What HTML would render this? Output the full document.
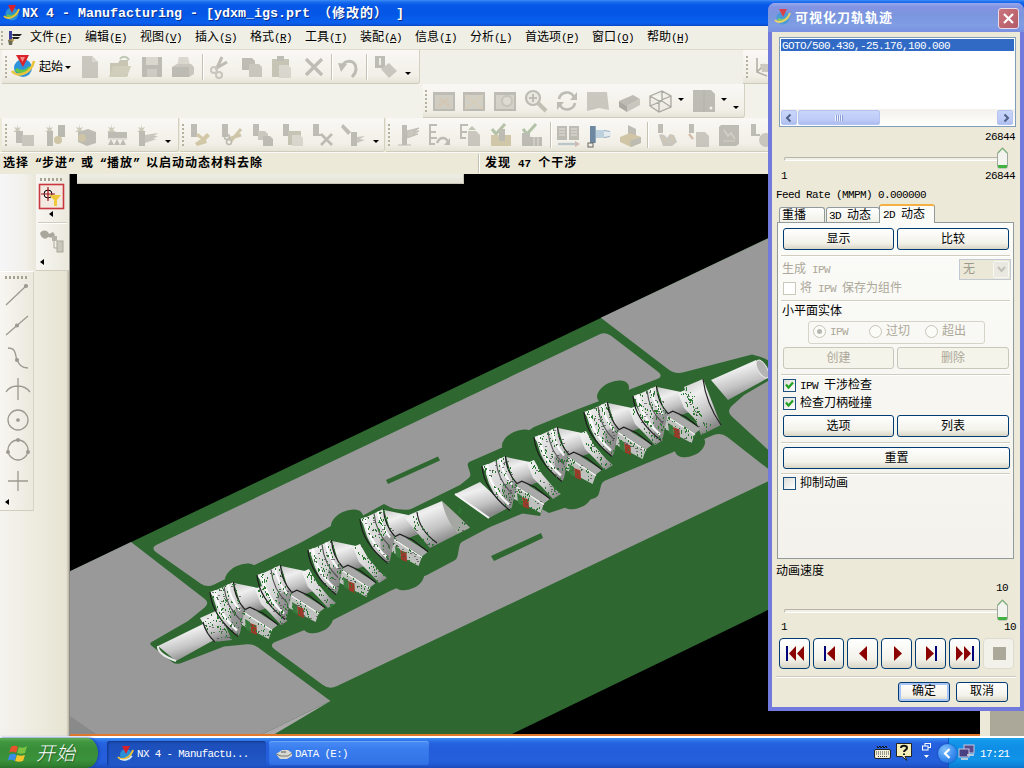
<!DOCTYPE html>
<html lang="zh-CN">
<head>
<meta charset="utf-8">
<title>NX 4 - Manufacturing</title>
<style>
*{box-sizing:border-box;margin:0;padding:0}
html,body{width:1024px;height:768px;overflow:hidden;background:#ece9d8}
body{position:relative;font-family:"Liberation Mono","Noto Sans CJK SC",monospace;font-size:12px;line-height:14px;color:#000}
.a{position:absolute}
.l{font-family:"Liberation Mono",monospace;font-size:11px;letter-spacing:-.6px;position:relative;top:0;word-spacing:0}
.t{position:absolute;white-space:nowrap;height:14px;line-height:14px;margin-top:1px;word-spacing:-1.2px}
.b{font-weight:bold;letter-spacing:1px}
.b .l{letter-spacing:0;font-weight:bold}
.q{display:inline-block;width:13px;letter-spacing:0}
/* ---------- main window ---------- */
#title{left:0;top:0;width:1024px;height:26px;background:linear-gradient(#3d8ef6 0,#1a6cee 2px,#0659e8 5px,#0457e6 14px,#0a60ee 22px,#0a5ae4 24px,#0a46c4 26px)}
#title .tx{left:22px;top:6px;text-shadow:1px 1px 0 #0a2f8a;color:#fff;font-weight:bold;font-size:13px;letter-spacing:1px;height:16px;line-height:16px;white-space:nowrap}
#title .tx .l{font-size:13.33px;letter-spacing:0;font-weight:bold;top:0}
#menubar{left:0;top:26px;width:1024px;height:24px;background:#f0efe6;border-bottom:1px solid #dedbcd}
#menubar .t{top:4px}
.ic{opacity:.72}
.tb{position:absolute;height:34px;background:linear-gradient(#f9f8f5,#f1efe6 80%,#e6e3d6);border-bottom:1px solid #cfccbc;border-right:1px solid #d4d1c2;border-radius:0 0 3px 0}
.grip{position:absolute;width:2px;margin-left:-2px;background-image:linear-gradient(#b4b19e 50%,transparent 50%);background-size:2px 4px}
.gripv{position:absolute;height:3px;background-image:linear-gradient(90deg,#a5a290 50%,transparent 50%);background-size:4px 3px}
.sep{position:absolute;width:2px;border-left:1px solid #c5c2b2;border-right:1px solid #fff}
.da{position:absolute;width:0;height:0;border:3px solid transparent;border-top:3px solid #000;border-bottom:0}
svg{position:absolute;overflow:visible}
#status{left:0;top:152px;width:768px;height:22px;background:#ece9d8;border-top:1px solid #fbfaf6}
/* ---------- dialog ---------- */
#dlg{left:768px;top:3px;width:256px;height:708px;background:#ece9d8;border:4px solid #727ade;border-top:0;border-radius:7px 7px 0 0}
#dtitle{left:-4px;top:0;width:256px;height:29px;border-radius:7px 7px 0 0;background:linear-gradient(#9aa7ec 0,#8393e3 4px,#7b96dd 12px,#7f9de4 22px,#7b90e2 29px)}
.btn{position:absolute;height:22px;border:1px solid #003c74;border-radius:3px;background:linear-gradient(#fff 0,#f3f2ea 70%,#d9d5c6 100%);text-align:center;line-height:20px;padding-top:1px}
.btn.dis{border-color:#c9c7ba;color:#aca899;background:#f5f4ea}
.hr{position:absolute;height:2px;border-top:1px solid #d0cdbf;border-bottom:1px solid #fff}
.cb{position:absolute;width:13px;height:13px;border:1px solid #1c5180;background:linear-gradient(135deg,#dcdcd7,#fff)}
.cb.dis{border-color:#cac8bb;background:#fff}
.dis{color:#aca899}
</style>
</head>
<body>
<!-- TITLE -->
<div id="title" class="a"><svg style="left:3px;top:4px" width="18" height="18" viewBox="0 0 18 18"><circle cx="9" cy="10" r="6.5" fill="#2b8fd6"/><path d="M4 11c2 2 7 2 10-2" stroke="#5fc24a" stroke-width="2.5" fill="none"/><path d="M1 12c3 4 12 2 15-7" stroke="#e9c23b" stroke-width="2" fill="none"/><path d="M5 1h8l-4 8z" fill="#d8202a"/></svg><div class="a tx"><span class="l">NX 4 - Manufacturing - [ydxm_igs.prt </span>（修改的）<span class="l"> ]</span></div></div>
<!-- MENUBAR -->
<div id="menubar" class="a">
<div class="grip" style="left:3px;top:5px;height:16px"></div>
<svg style="left:5px;top:4px" width="18" height="18" viewBox="0 0 18 18"><rect x="4" y="1" width="3" height="9" fill="#3a3f9a"/><path d="M3 10h5l-1 5H4z" fill="#6a6a55"/><path d="M7 4h10l-2 2H8zM7 7h8l-2 2H8z" fill="#222"/><path d="M2 10l7-1v2z" fill="#c8a23a"/></svg>
<div class="t" style="left:30px">文件<span class="l">(<u>F</u>)</span></div>
<div class="t" style="left:85px">编辑<span class="l">(<u>E</u>)</span></div>
<div class="t" style="left:140px">视图<span class="l">(<u>V</u>)</span></div>
<div class="t" style="left:195px">插入<span class="l">(<u>S</u>)</span></div>
<div class="t" style="left:250px">格式<span class="l">(<u>R</u>)</span></div>
<div class="t" style="left:305px">工具<span class="l">(<u>T</u>)</span></div>
<div class="t" style="left:360px">装配<span class="l">(<u>A</u>)</span></div>
<div class="t" style="left:415px">信息<span class="l">(<u>I</u>)</span></div>
<div class="t" style="left:470px">分析<span class="l">(<u>L</u>)</span></div>
<div class="t" style="left:525px">首选项<span class="l">(<u>P</u>)</span></div>
<div class="t" style="left:592px">窗口<span class="l">(<u>O</u>)</span></div>
<div class="t" style="left:647px">帮助<span class="l">(<u>H</u>)</span></div>
</div>
<!-- TOOLBARS ROW 1 -->
<div class="a" style="left:0;top:50px;width:1024px;height:34px;background:#f1f0e8"></div>
<div class="tb" style="left:2px;top:50px;width:418px"></div>
<div class="grip" style="left:7px;top:56px;height:22px"></div>
<svg style="left:11px;top:54px" width="26" height="26" viewBox="0 0 26 26"><circle cx="12" cy="14" r="9" fill="#2e93da"/><path d="M5 15c3 4 11 3 14-2" stroke="#62c44c" stroke-width="3.4" fill="none"/><path d="M1 17c5 7 19 3 22-10" stroke="#eac43c" stroke-width="2.6" fill="none"/><path d="M5 1h13l-6 12z" fill="#da222c"/><path d="M9 3h5l-2.5 5z" fill="#f58a8a"/></svg>
<div class="t" style="left:39px;top:60px">起始</div><div class="da" style="left:65px;top:66px"></div>
<svg class="ic" style="left:78px;top:55px" width="24" height="24" viewBox="0 0 24 24"><path d="M4 1h10l6 6v16H4z" fill="#b9b7ad"/><path d="M14 1v6h6z" fill="#cfcdc3"/></svg>
<svg class="ic" style="left:108px;top:55px" width="24" height="24" viewBox="0 0 24 24"><path d="M2 8h8l2-3h8v16H2z" fill="#b7b59c"/><path d="M1 22l4-11h18l-4 11z" fill="#c4c2aa"/><path d="M12 4c2-3 7-3 9 1" stroke="#a9b59c" stroke-width="2" fill="none"/></svg>
<svg class="ic" style="left:140px;top:55px" width="24" height="24" viewBox="0 0 24 24"><rect x="2" y="2" width="20" height="20" fill="#a9a89f"/><rect x="6" y="2" width="12" height="8" fill="#cfcdc3"/><rect x="7" y="14" width="10" height="8" fill="#bfbdb4"/></svg>
<svg class="ic" style="left:171px;top:55px" width="24" height="24" viewBox="0 0 24 24"><path d="M8 2h9l2 8H6z" fill="#cfcdc3"/><path d="M1 12l5-3h14l3 3v7l-5 3H1z" fill="#b9b7ad"/><path d="M1 12h17v10H1z" fill="#a9a89f"/></svg>
<svg class="ic" style="left:208px;top:55px" width="24" height="24" viewBox="0 0 24 24"><path d="M14 2L8 15M19 7L7 14" stroke="#a9a89f" stroke-width="3" fill="none"/><circle cx="6" cy="15" r="3" stroke="#b9b7ad" stroke-width="2" fill="none"/><circle cx="11" cy="20" r="3" stroke="#b9b7ad" stroke-width="2" fill="none"/></svg>
<svg class="ic" style="left:240px;top:55px" width="24" height="24" viewBox="0 0 24 24"><path d="M2 3h10l3 3v9H2z" fill="#a9a89f"/><path d="M9 9h10l3 3v10H9z" fill="#b9b7ad"/></svg>
<svg class="ic" style="left:270px;top:55px" width="24" height="24" viewBox="0 0 24 24"><rect x="2" y="4" width="17" height="18" fill="#b5b3a0"/><rect x="7" y="1" width="7" height="5" fill="#a9a89f"/><path d="M9 10h9l3 3v10H9z" fill="#cfcdc3"/></svg>
<svg class="ic" style="left:302px;top:55px" width="24" height="24" viewBox="0 0 24 24"><path d="M4 4l16 16M20 4L4 20" stroke="#a9a89f" stroke-width="3.2" fill="none"/></svg>
<svg class="ic" style="left:337px;top:55px" width="24" height="24" viewBox="0 0 24 24"><path d="M5 12c2-8 14-8 14 2c0 4-2 6-4 8" stroke="#a9a89f" stroke-width="3" fill="none"/><path d="M1 8l9 1-6 8z" fill="#a9a89f"/></svg>
<svg class="ic" style="left:373px;top:55px" width="24" height="24" viewBox="0 0 24 24"><rect x="2" y="1" width="10" height="12" fill="#a9a89f"/><rect x="6" y="3" width="2" height="7" fill="#ecebe3"/><path d="M8 14l8-6 8 8-8 7z" fill="#b9b7ad"/></svg>
<div class="sep" style="left:202px;top:54px;height:26px"></div>
<div class="sep" style="left:331px;top:54px;height:26px"></div>
<div class="sep" style="left:366px;top:54px;height:26px"></div>
<div class="da" style="left:405px;top:72px"></div>
<div class="tb" style="left:743px;top:50px;width:30px"></div><div class="grip" style="left:748px;top:56px;height:22px"></div>
<svg style="left:754px;top:56px" width="14" height="22" viewBox="0 0 14 22"><path d="M3 2v14l10 4M3 16l8-8" stroke="#b3b1a6" stroke-width="1.6" fill="none"/><path d="M6 8h8v8H8z" fill="#cbc9bf"/></svg>
<!-- ROW 2 -->
<div class="a" style="left:0;top:84px;width:1024px;height:34px;background:#f2f1ea"></div>
<div class="tb" style="left:423px;top:84px;width:322px"></div>
<div class="grip" style="left:427px;top:90px;height:22px"></div>
<svg class="ic" style="left:432px;top:89px" width="24" height="24" viewBox="0 0 24 24"><rect x="1" y="3" width="22" height="19" fill="#a9a89f"/><rect x="3" y="6" width="18" height="14" fill="#c2c0b3"/><path d="M7 9l10 8M17 9L7 17" stroke="#c9b8a0" stroke-width="2.5"/></svg>
<svg class="ic" style="left:462px;top:89px" width="24" height="24" viewBox="0 0 24 24"><rect x="1" y="3" width="22" height="19" fill="#a9a89f"/><rect x="3" y="6" width="18" height="14" fill="#c6c4b8"/><path d="M3 6l9 7 9-7M3 20l9-7 9 7" stroke="#cdbfa8" stroke-width="2" fill="none"/></svg>
<svg class="ic" style="left:493px;top:89px" width="24" height="24" viewBox="0 0 24 24"><rect x="1" y="3" width="22" height="19" fill="#a9a89f"/><rect x="3" y="6" width="18" height="14" fill="#c9c7bc"/><circle cx="14" cy="12" r="5" stroke="#b5b3a8" stroke-width="2" fill="#d5d3c9"/></svg>
<svg class="ic" style="left:524px;top:89px" width="24" height="24" viewBox="0 0 24 24"><circle cx="9" cy="9" r="7" stroke="#a9a89f" stroke-width="2.2" fill="#e6e5dd"/><path d="M5 9h8M9 5v8" stroke="#a9a89f" stroke-width="2"/><path d="M14 14l8 8" stroke="#b0aea0" stroke-width="4"/></svg>
<svg class="ic" style="left:555px;top:89px" width="24" height="24" viewBox="0 0 24 24"><path d="M4 10a8 8 0 0 1 15-2M20 14a8 8 0 0 1-15 2" stroke="#a9a89f" stroke-width="2.6" fill="none"/><path d="M22 3v8h-7zM2 21v-8h7z" fill="#a9a89f"/></svg>
<svg class="ic" style="left:586px;top:89px" width="24" height="24" viewBox="0 0 24 24"><path d="M1 3h20l2 18-10-2-12 3z" fill="#b9b7ad"/></svg>
<svg class="ic" style="left:617px;top:89px" width="24" height="24" viewBox="0 0 24 24"><path d="M2 12l14-6 7 4-13 7z" fill="#a9a89f"/><path d="M2 12v6l8 5v-6z" fill="#8f8e87"/><path d="M10 17v6l13-7v-6z" fill="#b9b7ad"/></svg>
<svg class="ic" style="left:648px;top:89px" width="24" height="24" viewBox="0 0 24 24"><path d="M2 7l12-5 9 5v11l-12 5-9-6zM2 7l9 5 12-5M11 12v11M14 2v10l9 6M14 12L2 17" stroke="#8d8c86" stroke-width="1.3" fill="#e8e7df" fill-opacity=".6"/></svg>
<svg class="ic" style="left:692px;top:89px" width="24" height="24" viewBox="0 0 24 24"><path d="M1 1h18l4 4v18H1z" fill="#a9a89f"/><path d="M12 1v22" stroke="#9a998f" stroke-width="1"/><circle cx="19" cy="19" r="1.5" fill="#f4f3ec"/></svg>
<div class="da" style="left:678px;top:98px"></div><div class="da" style="left:721px;top:98px"></div><div class="da" style="left:733px;top:106px"></div>
<!-- ROW 3 -->
<div class="a" style="left:0;top:118px;width:1024px;height:34px;background:#ece9d8"></div>
<div class="tb" style="left:2px;top:118px;width:177px"></div><div class="grip" style="left:7px;top:124px;height:22px"></div>
<svg class="ic" style="left:12px;top:123px" width="24" height="24" viewBox="0 0 24 24"><path d="M5 1l1 4 3-1-2 3 3 2h-4l-1 4-1-4H1l3-2-2-3 3 1z" fill="#bdbba5"/><rect x="4" y="8" width="7" height="12" fill="#a9a89f"/><rect x="10" y="12" width="12" height="11" fill="#b9b7ad"/></svg>
<svg class="ic" style="left:43px;top:123px" width="24" height="24" viewBox="0 0 24 24"><path d="M6 1l1 4 3-1-2 3 3 2h-4l-1 4-1-4H2l3-2-2-3 3 1z" fill="#bdbba5"/><rect x="4" y="8" width="6" height="15" fill="#a9a89f"/><rect x="15" y="2" width="7" height="12" fill="#a3a29b"/><circle cx="15" cy="17" r="4" fill="#c2b58e"/></svg>
<svg class="ic" style="left:73px;top:123px" width="24" height="24" viewBox="0 0 24 24"><path d="M6 1l1 4 3-1-2 3 3 2h-4l-1 4-1-4H2l3-2-2-3 3 1z" fill="#bdbba5"/><path d="M5 9l10-3 8 3v11l-9 3-9-4z" fill="#a9a89f"/><circle cx="9" cy="15" r="4" fill="#c0b48f"/></svg>
<svg class="ic" style="left:105px;top:123px" width="24" height="24" viewBox="0 0 24 24"><path d="M6 1l1 4 3-1-2 3 3 2h-4l-1 4-1-4H2l3-2-2-3 3 1z" fill="#bdbba5"/><rect x="3" y="9" width="19" height="6" fill="#a9a89f"/><path d="M3 22l3-6 3 6 3-6 3 6 3-6 3 6z" fill="#a9a89f"/><rect x="3" y="15" width="19" height="2" fill="#d8d6cc"/></svg>
<svg class="ic" style="left:135px;top:123px" width="24" height="24" viewBox="0 0 24 24"><path d="M6 1l1 4 3-1-2 3 3 2h-4l-1 4-1-4H2l3-2-2-3 3 1z" fill="#bdbba5"/><rect x="4" y="8" width="6" height="15" fill="#a9a89f"/><path d="M10 12l13-2-4 3 4 0-5 3 4 0-12 4z" fill="#b9b7ad"/></svg>
<div class="da" style="left:165px;top:140px"></div>
<div class="tb" style="left:180px;top:118px;width:205px"></div><div class="grip" style="left:184px;top:124px;height:22px"></div>
<svg class="ic" style="left:188px;top:123px" width="24" height="24" viewBox="0 0 24 24"><rect x="3" y="1" width="6" height="13" fill="#a9a89f"/><path d="M10 10l5 4 4-4 3 3-4 4 1 3-10 3-2-3 6-4-5-3z" fill="#c6b98f"/></svg>
<svg class="ic" style="left:219px;top:123px" width="24" height="24" viewBox="0 0 24 24"><rect x="3" y="1" width="6" height="13" fill="#a9a89f"/><path d="M22 6L12 18M22 12l-13 4" stroke="#c0b590" stroke-width="3"/><circle cx="10" cy="19" r="2.5" stroke="#a9a89f" stroke-width="1.6" fill="none"/><circle cx="8" cy="14" r="2.5" stroke="#a9a89f" stroke-width="1.6" fill="none"/></svg>
<svg class="ic" style="left:250px;top:123px" width="24" height="24" viewBox="0 0 24 24"><rect x="3" y="1" width="6" height="12" fill="#a9a89f"/><path d="M8 8h7l3 3v6H8z" fill="#b9b7ad"/><path d="M13 13h7l3 3v7H13z" fill="#a9a89f"/></svg>
<svg class="ic" style="left:280px;top:123px" width="24" height="24" viewBox="0 0 24 24"><rect x="3" y="1" width="6" height="12" fill="#a9a89f"/><rect x="8" y="8" width="13" height="14" fill="#b5b3a0"/><path d="M12 12h8l3 3v8H12z" fill="#cfcdc3"/></svg>
<svg class="ic" style="left:310px;top:123px" width="24" height="24" viewBox="0 0 24 24"><rect x="3" y="1" width="6" height="12" fill="#a9a89f"/><path d="M3 12h8" stroke="#a9a89f" stroke-width="2"/><path d="M11 11l11 11M22 11L11 22" stroke="#a9a89f" stroke-width="2.6"/></svg>
<svg class="ic" style="left:341px;top:123px" width="24" height="24" viewBox="0 0 24 24"><path d="M2 1l8 8-3 3-7-8z" fill="#a9a89f"/><rect x="10" y="9" width="6" height="14" fill="#a9a89f"/><path d="M16 14l8-1-5 3 5 1-8 3z" fill="#b9b7ad"/></svg>
<div class="da" style="left:373px;top:140px"></div>
<div class="tb" style="left:386px;top:118px;width:390px"></div><div class="grip" style="left:390px;top:124px;height:22px"></div>
<svg class="ic" style="left:396px;top:123px" width="24" height="24" viewBox="0 0 24 24"><rect x="6" y="2" width="5" height="20" fill="#a9a89f"/><path d="M2 22h13M11 8l12-3-5 3 5 0-6 3 5 0-11 4z" fill="#b9b7ad" stroke="#a9a89f"/></svg>
<svg class="ic" style="left:427px;top:123px" width="24" height="24" viewBox="0 0 24 24"><path d="M10 2H3v7h6M3 9v6h7M3 15v6h5" stroke="#a9a89f" stroke-width="2" fill="none"/><path d="M10 20c3-7 9-6 11-1" stroke="#a9a89f" stroke-width="2.4" fill="none"/><path d="M23 15v7h-6z" fill="#a9a89f"/></svg>
<svg class="ic" style="left:458px;top:123px" width="24" height="24" viewBox="0 0 24 24"><path d="M10 2H3v7h6M3 9v6h5" stroke="#a9a89f" stroke-width="2" fill="none"/><path d="M10 8h8l4 4v11H10z" fill="#b9b7ad"/><path d="M14 3l4 4h-8z" fill="#a9b59c"/></svg>
<svg class="ic" style="left:489px;top:123px" width="24" height="24" viewBox="0 0 24 24"><path d="M3 6l4 5 9-10" stroke="#9bb08c" stroke-width="3" fill="none"/><path d="M2 12h20v11H2z" fill="#c4b890"/><rect x="10" y="6" width="6" height="12" fill="#a9a89f"/></svg>
<svg class="ic" style="left:520px;top:123px" width="24" height="24" viewBox="0 0 24 24"><path d="M3 6l4 5 9-10" stroke="#9bb08c" stroke-width="3" fill="none"/><path d="M2 10h8v13H2zM10 14h12v9H10z" fill="#a9a89f"/><path d="M14 14v9M18 14v9" stroke="#d8d6cc"/></svg>
<svg class="ic" style="left:556px;top:123px" width="24" height="24" viewBox="0 0 24 24"><path d="M1 3h10v14H1zM13 3h10v14H13z" fill="#a9a89f"/><path d="M3 6h6M3 9h6M3 12h6M15 6h6M15 9h6M15 12h6" stroke="#dddbd0"/><path d="M2 21h20" stroke="#a8b7c0" stroke-width="2.4"/><path d="M19 18l5 3-5 3z" fill="#c0a8a0"/></svg>
<svg class="ic" style="left:588px;top:123px" width="24" height="24" viewBox="0 0 24 24"><path d="M2 3h6v4h8l6 1v6l-6 1H8v5H2z" fill="#6b8aa8"/><path d="M8 7h8v8H8z" fill="#a9c4d8"/><path d="M16 8l7 1v4l-7 1z" fill="#dfe9ef"/><rect x="2" y="3" width="5" height="17" fill="#3c5f85"/><rect x="0" y="20" width="5" height="4" fill="none" stroke="#333"/></svg>
<svg class="ic" style="left:618px;top:123px" width="24" height="24" viewBox="0 0 24 24"><path d="M10 2l8 4v10l-8-3z" fill="#a9a89f"/><path d="M2 14l10-4 11 4v6l-10 4-11-5z" fill="#c3b68d"/><path d="M12 18l11-4v6l-10 4z" fill="#a9a89f"/></svg>
<svg class="ic" style="left:655px;top:123px" width="24" height="24" viewBox="0 0 24 24"><rect x="3" y="1" width="5" height="9" fill="#a9a89f"/><path d="M4 12c3-2 6 0 8 3l3-4 4 1 3 7-5 4H8z" fill="#b9b7ad"/><path d="M8 14l3 5M16 12l2 6" stroke="#c8b7a0" stroke-width="2"/></svg>
<svg class="ic" style="left:686px;top:123px" width="24" height="24" viewBox="0 0 24 24"><rect x="3" y="1" width="5" height="9" fill="#a9a89f"/><path d="M3 11l4 5" stroke="#c8a890" stroke-width="2.4"/><path d="M10 9h9l4 4v11H10z" fill="#b9b7ad"/></svg>
<svg class="ic" style="left:717px;top:123px" width="24" height="24" viewBox="0 0 24 24"><path d="M4 2h18v19l-3 2H2V4z" fill="#a9a89f"/><path d="M7 7l4 6 3-3 4 6" stroke="#c7c5ba" stroke-width="1.6" fill="none"/><path d="M6 18h12" stroke="#c7c5ba"/></svg>
<svg class="ic" style="left:748px;top:123px" width="24" height="24" viewBox="0 0 24 24"><rect x="3" y="1" width="5" height="11" fill="#a9a89f"/><path d="M3 12h9" stroke="#a9a89f" stroke-width="2"/><circle cx="18" cy="17" r="7" fill="#b9b7ad"/></svg>
<div class="sep" style="left:550px;top:122px;height:26px"></div>
<div class="sep" style="left:647px;top:122px;height:26px"></div>
<!-- STATUS -->
<div id="status" class="a"><div class="t b" style="left:3px;top:3px">选择<span class="q" style="text-align:right">“</span>步进<span class="q">”</span>或<span class="q" style="text-align:right">“</span>播放<span class="q">”</span>以启动动态材料去除</div><div class="sep" style="left:478px;top:1px;height:19px"></div><div class="t b" style="left:485px;top:3px">发现 <span class="l b">47</span> 个干涉</div></div>
<!-- LEFT PANEL -->
<div class="a" style="left:0;top:174px;width:70px;height:563px;background:linear-gradient(90deg,#f4f3ee,#eeece0 50%,#e7e4d3 96%,#b9b6a8);border-right:1px solid #8e8c80"></div>
<div class="a" style="left:0;top:174px;width:36px;height:96px;background:linear-gradient(90deg,#f6f6f8,#f1f0ea 70%,#e9e7da)"></div>
<div class="a" style="left:36px;top:174px;width:33px;height:97px;background:linear-gradient(90deg,#f7f6f2,#ebe9dd);border-bottom:1px solid #d0cdbf"></div>
<div class="gripv" style="left:40px;top:178px;width:23px"></div>
<svg style="left:39px;top:184px" width="25" height="25" viewBox="0 0 25 25"><rect x=".5" y=".5" width="24" height="24" fill="#f4e9e0" stroke="#c8383e" stroke-width="1.6"/><circle cx="9" cy="10" r="4" stroke="#000" fill="none"/><path d="M2 10h14M9 3v14" stroke="#a0141a" stroke-width="1.2"/><path d="M10 11h12l-4 5v6h-3v-6z" fill="#f0c83c"/></svg>
<div class="a" style="left:49px;top:211px;border:3px solid transparent;border-right:4px solid #000;border-left:0"></div>
<div class="hr" style="left:38px;top:222px;width:29px"></div>
<svg style="left:39px;top:229px" width="25" height="25" viewBox="0 0 25 25"><path d="M1 4c3-4 8-3 9 1l4-2 2 3-2 3-5-1c-2 3-7 2-8-4z" fill="#a9a79c"/><rect x="13" y="7" width="5" height="5" fill="#b5b3a8"/><rect x="18" y="12" width="6" height="11" fill="#c9c7bc" stroke="#a9a79c"/><path d="M15 12v7h3" stroke="#a9a79c" fill="none"/></svg>
<div class="a" style="left:40px;top:259px;border:3px solid transparent;border-right:4px solid #000;border-left:0"></div>
<div class="a" style="left:0;top:271px;width:34px;height:240px;background:linear-gradient(90deg,#f7f6f2,#ebe9dd);border-right:1px solid #d8d5c6;border-bottom:1px solid #d0cdbf;border-top:1px solid #fff"></div>
<div class="gripv" style="left:5px;top:276px;width:23px"></div>
<svg style="left:3px;top:282px" width="30" height="216" viewBox="0 0 30 216" fill="none" stroke="#9c9a90" stroke-width="1.3"><path d="M3 23L23 4"/><circle cx="23" cy="4" r="1.4" fill="#9c9a90"/><path d="M3 53L25 34"/><circle cx="14" cy="43.500" r="1.400" fill="#9c9a90"/><path d="M5 66c9 0 7 8 9 12s4 8 11 8"/><circle cx="14" cy="78" r="1.400" fill="#9c9a90"/><path d="M15 96v22M3 110c5-8 18-8 24 0"/><circle cx="15" cy="138" r="10"/><circle cx="15" cy="138" r="1.2" fill="#9c9a90"/><circle cx="15" cy="168" r="10"/><circle cx="15" cy="158" r="1.300" fill="#9c9a90"/><circle cx="5" cy="170" r="1.300" fill="#9c9a90"/><circle cx="25" cy="170" r="1.300" fill="#9c9a90"/><path d="M15 189v20M5 199h20"/></svg>
<div class="a" style="left:5px;top:499px;border:3px solid transparent;border-right:4px solid #000;border-left:0"></div>
<!-- VIEWPORT -->
<div class="a" style="left:70px;top:174px;width:910px;height:561px;background:#000"></div>
<div class="a" style="left:77px;top:174px;width:387px;height:10px;background:linear-gradient(#efeee6,#e4e2d6);border-bottom:1px solid #c9c6b6;border-right:1px solid #c9c6b6"></div>
<svg class="a" style="left:0;top:0" width="1024" height="768" viewBox="0 0 1024 768">
<defs><clipPath id="vpc"><rect x="70" y="176" width="910" height="558"/></clipPath>
<linearGradient id="gw" x1="0" y1="0" x2="1" y2="1"><stop offset="0" stop-color="#f6f6f6"/><stop offset=".55" stop-color="#d2d2d2"/><stop offset="1" stop-color="#7c7c7c"/></linearGradient>
<linearGradient id="gc" x1="0" y1="0" x2=".45" y2="1"><stop offset="0" stop-color="#c9c9c9"/><stop offset=".35" stop-color="#efefef"/><stop offset=".7" stop-color="#c4c4c4"/><stop offset="1" stop-color="#8a8a8a"/></linearGradient>
</defs>
<g clip-path="url(#vpc)">
<path d="M70 571.200L790 227.600V599.300L512 734H70z" fill="#2e6830"/>
<path d="M330.500 701L274 734.500H262z" fill="#aba8a9"/>
<path d="M60.0 576.0L131.0 542.0L204.5 598.7Q210.0 603.0 204.6 607.4L188.0 621.0L151.6 642.0Q149.0 643.5 151.3 645.4L172.1 661.9Q176.0 665.0 180.7 663.2L224.0 646.5L247.0 644.3Q253.0 643.7 257.8 647.3L330.5 701.0L263.0 734.0L60.0 740.0Z" fill="#999999" />
<path d="M70 716L96 734H70z" fill="#8a8a8a"/>
<path d="M600.8 317.7L790.0 228.0L790.0 372.0L768.4 360.4Q764.0 358.0 759.2 356.6L752.0 354.5L683.7 372.2Q675.0 374.5 667.9 369.0Z" fill="#999999" />
<path d="M790.0 368.0L744.0 395.0L732.0 405.7Q726.0 411.0 731.9 416.4L790.0 470.0Z" fill="#999999" />
<path d="M156.5 552.6Q150.0 548.0 157.2 544.6L599.2 334.5Q605.5 331.5 611.0 335.8L657.7 371.6Q664.0 376.5 656.5 379.3L577.0 409.5L534.0 427.0L504.5 446.6L469.7 461.8Q467.0 463.0 467.9 465.9L470.1 473.1Q471.0 476.0 468.7 477.9L460.0 485.0L412.6 508.2Q409.0 510.0 405.0 509.7L398.0 509.3Q394.0 509.0 390.4 507.2L384.0 504.0L364.0 515.0L331.0 526.0L300.0 543.0L214.2 584.5Q207.0 588.0 200.5 583.4Z" fill="#999999" />
<path d="M274.8 649.6Q268.4 644.9 275.8 641.8L302.0 631.0L333.0 620.0L390.0 591.0L427.0 575.0L454.4 560.4Q457.0 559.0 457.6 556.1L459.4 545.9Q460.0 543.0 462.6 541.6L490.0 527.0L538.0 507.0L549.0 513.0L595.1 497.9Q598.0 497.0 598.8 494.1L601.2 484.9Q602.0 482.0 604.8 480.8L640.0 466.0L713.6 435.1Q721.0 432.0 727.3 436.9L790.0 486.0L790.0 471.0L336.5 686.3Q329.3 689.7 322.9 685.0Z" fill="#999999" />
<ellipse cx="241" cy="575" rx="17" ry="10" transform="rotate(-25 241 575)" fill="#2e6830"/>
<ellipse cx="347" cy="521" rx="17" ry="10" transform="rotate(-25 347 521)" fill="#2e6830"/>
<ellipse cx="518" cy="441" rx="17" ry="10" transform="rotate(-25 518 441)" fill="#2e6830"/>
<ellipse cx="613" cy="392" rx="17" ry="10" transform="rotate(-25 613 392)" fill="#2e6830"/>
<ellipse cx="318" cy="622" rx="16" ry="10" transform="rotate(-25 318 622)" fill="#2e6830"/>
<ellipse cx="409" cy="579" rx="16" ry="10" transform="rotate(-25 409 579)" fill="#2e6830"/>
<ellipse cx="577" cy="498" rx="16" ry="10" transform="rotate(-25 577 498)" fill="#2e6830"/>
<ellipse cx="690" cy="446" rx="16" ry="10" transform="rotate(-25 690 446)" fill="#2e6830"/>
<path d="M386 480L438 456.500 440 460.500 388 484z" fill="#2e6830"/>
<path d="M491 556L541 533 543 538 494 561z" fill="#2e6830"/>
<path d="M158 646L203 624L214 640L176 661z" fill="url(#gc)"/>
<path d="M158 646q-1 8 18 15" stroke="#e9e9e9" stroke-width="2" fill="none"/>
<path d="M200 618L218 610L232 640L214 642z" fill="url(#gc)"/>
<path d="M203 622q3 12 12 20" stroke="#222" stroke-width="1.200" fill="none"/>
<path d="M234.0 583.0L258.0 588.0L269.0 607.0L253.0 613.0L243.0 612.0z" fill="url(#gc)"/>
<path d="M255.0 589.0L262.0 586.0L270.0 600.0L282.0 614.0L289.0 620.0L281.0 625.0L270.0 613.0L261.0 604.0z" fill="url(#gw)"/>
<path d="M240.0 622.0L270.0 636.0L268.0 642.0L240.0 638.0z" fill="#2e6830"/>
<path d="M242.8 610.7L272.0 629.5L268.6 638.9L241.6 624.8z" fill="#bfc1be"/>
<path d="M250.0 623.0L256.5 625.5L257.0 635.0L251.0 632.5z" fill="#9a3a28"/>
<path d="M245.0 619.0L250.0 622.0L251.0 632.0L246.0 629.0z" fill="#3b7a3e"/>
<path d="M242.8 610.7L249.8 607.2L278.0 624.8L272.0 629.5z" fill="#a9a9a9"/>
<path d="M242.8 610.7L249.8 607.2L262.7 613.0L278.0 624.8" stroke="#1c1c1c" stroke-width="1.200" fill="none"/>
<path d="M244.0 612.5L272.0 630.5" stroke="#f2f2f2" stroke-width="1.400" fill="none"/>
<path d="M210.0 592.0L217.0 589.7L225.0 586.0L233.4 582.0L236.0 595.5L242.0 606.0L245.0 609.6L243.0 616.0L241.6 624.8L240.0 633.0L238.0 636.5L224.0 623.6L217.0 609.6L213.0 597.0z" fill="url(#gw)"/>
<path d="M230.0 612.0L242.0 606.0L245.0 609.6L241.6 624.8L238.0 636.5L232.0 630.0z" fill="#808080" opacity=".6"/>
<path d="M210.0 592.0q2 24 28 44.500" stroke="#1c1c1c" stroke-width="1.300" fill="none"/>
<path d="M233.4 582.0q1 16 11.600 27.600" stroke="#1c1c1c" stroke-width="1.200" fill="none"/>
<path d="M224.0 586.5q2 20 16 33" stroke="#555" stroke-width="1.200" fill="none"/>
<path d="M215.0 590.5q2 22 22 40" stroke="#fff" stroke-width="2.400" fill="none" opacity=".9"/>
<path d="M228.0 584.5q2 14 12 26" stroke="#fff" stroke-width="2" fill="none" opacity=".9"/>
<path d="M281.0 566.0L305.0 571.0L316.0 590.0L300.0 596.0L290.0 595.0z" fill="url(#gc)"/>
<path d="M302.0 572.0L309.0 569.0L317.0 583.0L329.0 597.0L336.0 603.0L328.0 608.0L317.0 596.0L308.0 587.0z" fill="url(#gw)"/>
<path d="M287.0 605.0L317.0 619.0L315.0 625.0L287.0 621.0z" fill="#2e6830"/>
<path d="M289.8 593.7L319.0 612.5L315.6 621.9L288.6 607.8z" fill="#bfc1be"/>
<path d="M297.0 606.0L303.5 608.5L304.0 618.0L298.0 615.5z" fill="#9a3a28"/>
<path d="M292.0 602.0L297.0 605.0L298.0 615.0L293.0 612.0z" fill="#3b7a3e"/>
<path d="M289.8 593.7L296.8 590.2L325.0 607.8L319.0 612.5z" fill="#a9a9a9"/>
<path d="M289.8 593.7L296.8 590.2L309.7 596.0L325.0 607.8" stroke="#1c1c1c" stroke-width="1.200" fill="none"/>
<path d="M291.0 595.5L319.0 613.5" stroke="#f2f2f2" stroke-width="1.400" fill="none"/>
<path d="M257.0 575.0L264.0 572.7L272.0 569.0L280.4 565.0L283.0 578.5L289.0 589.0L292.0 592.6L290.0 599.0L288.6 607.8L287.0 616.0L285.0 619.5L271.0 606.6L264.0 592.6L260.0 580.0z" fill="url(#gw)"/>
<path d="M277.0 595.0L289.0 589.0L292.0 592.6L288.6 607.8L285.0 619.5L279.0 613.0z" fill="#808080" opacity=".6"/>
<path d="M257.0 575.0q2 24 28 44.500" stroke="#1c1c1c" stroke-width="1.300" fill="none"/>
<path d="M280.4 565.0q1 16 11.600 27.600" stroke="#1c1c1c" stroke-width="1.200" fill="none"/>
<path d="M271.0 569.5q2 20 16 33" stroke="#555" stroke-width="1.200" fill="none"/>
<path d="M262.0 573.5q2 22 22 40" stroke="#fff" stroke-width="2.400" fill="none" opacity=".9"/>
<path d="M275.0 567.5q2 14 12 26" stroke="#fff" stroke-width="2" fill="none" opacity=".9"/>
<path d="M332.0 541.0L356.0 546.0L367.0 565.0L351.0 571.0L341.0 570.0z" fill="url(#gc)"/>
<path d="M353.0 547.0L360.0 544.0L368.0 558.0L380.0 572.0L387.0 578.0L379.0 583.0L368.0 571.0L359.0 562.0z" fill="url(#gw)"/>
<path d="M338.0 580.0L368.0 594.0L366.0 600.0L338.0 596.0z" fill="#2e6830"/>
<path d="M340.8 568.7L370.0 587.5L366.6 596.9L339.6 582.8z" fill="#bfc1be"/>
<path d="M348.0 581.0L354.5 583.5L355.0 593.0L349.0 590.5z" fill="#9a3a28"/>
<path d="M343.0 577.0L348.0 580.0L349.0 590.0L344.0 587.0z" fill="#3b7a3e"/>
<path d="M340.8 568.7L347.8 565.2L376.0 582.8L370.0 587.5z" fill="#a9a9a9"/>
<path d="M340.8 568.7L347.8 565.2L360.7 571.0L376.0 582.8" stroke="#1c1c1c" stroke-width="1.200" fill="none"/>
<path d="M342.0 570.5L370.0 588.5" stroke="#f2f2f2" stroke-width="1.400" fill="none"/>
<path d="M308.0 550.0L315.0 547.7L323.0 544.0L331.4 540.0L334.0 553.5L340.0 564.0L343.0 567.6L341.0 574.0L339.6 582.8L338.0 591.0L336.0 594.5L322.0 581.6L315.0 567.6L311.0 555.0z" fill="url(#gw)"/>
<path d="M328.0 570.0L340.0 564.0L343.0 567.6L339.6 582.8L336.0 594.5L330.0 588.0z" fill="#808080" opacity=".6"/>
<path d="M308.0 550.0q2 24 28 44.500" stroke="#1c1c1c" stroke-width="1.300" fill="none"/>
<path d="M331.4 540.0q1 16 11.600 27.600" stroke="#1c1c1c" stroke-width="1.200" fill="none"/>
<path d="M322.0 544.5q2 20 16 33" stroke="#555" stroke-width="1.200" fill="none"/>
<path d="M313.0 548.5q2 22 22 40" stroke="#fff" stroke-width="2.400" fill="none" opacity=".9"/>
<path d="M326.0 542.5q2 14 12 26" stroke="#fff" stroke-width="2" fill="none" opacity=".9"/>
<path d="M384.0 510.0L408.0 515.0L419.0 534.0L403.0 540.0L393.0 539.0z" fill="url(#gc)"/>
<path d="M390.0 549.0L420.0 563.0L418.0 569.0L390.0 565.0z" fill="#2e6830"/>
<path d="M392.8 537.7L422.0 556.5L418.6 565.9L391.6 551.8z" fill="#bfc1be"/>
<path d="M400.0 550.0L406.5 552.5L407.0 562.0L401.0 559.5z" fill="#9a3a28"/>
<path d="M395.0 546.0L400.0 549.0L401.0 559.0L396.0 556.0z" fill="#3b7a3e"/>
<path d="M392.8 537.7L399.8 534.2L428.0 551.8L422.0 556.5z" fill="#a9a9a9"/>
<path d="M392.8 537.7L399.8 534.2L412.7 540.0L428.0 551.8" stroke="#1c1c1c" stroke-width="1.200" fill="none"/>
<path d="M394.0 539.5L422.0 557.5" stroke="#f2f2f2" stroke-width="1.400" fill="none"/>
<path d="M360.0 519.0L367.0 516.7L375.0 513.0L383.4 509.0L386.0 522.5L392.0 533.0L395.0 536.6L393.0 543.0L391.6 551.8L390.0 560.0L388.0 563.5L374.0 550.6L367.0 536.6L363.0 524.0z" fill="url(#gw)"/>
<path d="M380.0 539.0L392.0 533.0L395.0 536.6L391.6 551.8L388.0 563.5L382.0 557.0z" fill="#808080" opacity=".6"/>
<path d="M360.0 519.0q2 24 28 44.500" stroke="#1c1c1c" stroke-width="1.300" fill="none"/>
<path d="M383.4 509.0q1 16 11.600 27.600" stroke="#1c1c1c" stroke-width="1.200" fill="none"/>
<path d="M374.0 513.5q2 20 16 33" stroke="#555" stroke-width="1.200" fill="none"/>
<path d="M365.0 517.5q2 22 22 40" stroke="#fff" stroke-width="2.400" fill="none" opacity=".9"/>
<path d="M378.0 511.5q2 14 12 26" stroke="#fff" stroke-width="2" fill="none" opacity=".9"/>
<path d="M404 517L442 501L457.5 534L430 548z" fill="url(#gc)"/>
<path d="M442 501Q456 513.5 470.1 527.7L457.5 534Q444.8 517.5 442 501z" fill="#a5a7a2"/>
<path d="M417 512q2 18 20 31" stroke="#222" stroke-width="1.200" fill="none"/>
<path d="M455 494L480 482L508 508L489 518z" fill="url(#gc)"/>
<path d="M455 494L489 518" stroke="#f4f4f4" stroke-width="2" fill="none"/>
<path d="M506.0 457.0L530.0 462.0L541.0 481.0L525.0 487.0L515.0 486.0z" fill="url(#gc)"/>
<path d="M527.0 463.0L534.0 460.0L542.0 474.0L554.0 488.0L561.0 494.0L553.0 499.0L542.0 487.0L533.0 478.0z" fill="url(#gw)"/>
<path d="M512.0 496.0L542.0 510.0L540.0 516.0L512.0 512.0z" fill="#2e6830"/>
<path d="M514.8 484.7L544.0 503.5L540.6 512.9L513.6 498.8z" fill="#bfc1be"/>
<path d="M522.0 497.0L528.5 499.5L529.0 509.0L523.0 506.5z" fill="#9a3a28"/>
<path d="M517.0 493.0L522.0 496.0L523.0 506.0L518.0 503.0z" fill="#3b7a3e"/>
<path d="M514.8 484.7L521.8 481.2L550.0 498.8L544.0 503.5z" fill="#a9a9a9"/>
<path d="M514.8 484.7L521.8 481.2L534.7 487.0L550.0 498.8" stroke="#1c1c1c" stroke-width="1.200" fill="none"/>
<path d="M516.0 486.5L544.0 504.5" stroke="#f2f2f2" stroke-width="1.400" fill="none"/>
<path d="M482.0 466.0L489.0 463.7L497.0 460.0L505.4 456.0L508.0 469.5L514.0 480.0L517.0 483.6L515.0 490.0L513.6 498.8L512.0 507.0L510.0 510.5L496.0 497.6L489.0 483.6L485.0 471.0z" fill="url(#gw)"/>
<path d="M502.0 486.0L514.0 480.0L517.0 483.6L513.6 498.8L510.0 510.5L504.0 504.0z" fill="#808080" opacity=".6"/>
<path d="M482.0 466.0q2 24 28 44.500" stroke="#1c1c1c" stroke-width="1.300" fill="none"/>
<path d="M505.4 456.0q1 16 11.600 27.600" stroke="#1c1c1c" stroke-width="1.200" fill="none"/>
<path d="M496.0 460.5q2 20 16 33" stroke="#555" stroke-width="1.200" fill="none"/>
<path d="M487.0 464.5q2 22 22 40" stroke="#fff" stroke-width="2.400" fill="none" opacity=".9"/>
<path d="M500.0 458.5q2 14 12 26" stroke="#fff" stroke-width="2" fill="none" opacity=".9"/>
<path d="M558.0 428.0L582.0 433.0L593.0 452.0L577.0 458.0L567.0 457.0z" fill="url(#gc)"/>
<path d="M579.0 434.0L586.0 431.0L594.0 445.0L606.0 459.0L613.0 465.0L605.0 470.0L594.0 458.0L585.0 449.0z" fill="url(#gw)"/>
<path d="M564.0 467.0L594.0 481.0L592.0 487.0L564.0 483.0z" fill="#2e6830"/>
<path d="M566.8 455.7L596.0 474.5L592.6 483.9L565.6 469.8z" fill="#bfc1be"/>
<path d="M574.0 468.0L580.5 470.5L581.0 480.0L575.0 477.5z" fill="#9a3a28"/>
<path d="M569.0 464.0L574.0 467.0L575.0 477.0L570.0 474.0z" fill="#3b7a3e"/>
<path d="M566.8 455.7L573.8 452.2L602.0 469.8L596.0 474.5z" fill="#a9a9a9"/>
<path d="M566.8 455.7L573.8 452.2L586.7 458.0L602.0 469.8" stroke="#1c1c1c" stroke-width="1.200" fill="none"/>
<path d="M568.0 457.5L596.0 475.5" stroke="#f2f2f2" stroke-width="1.400" fill="none"/>
<path d="M534.0 437.0L541.0 434.7L549.0 431.0L557.4 427.0L560.0 440.5L566.0 451.0L569.0 454.6L567.0 461.0L565.6 469.8L564.0 478.0L562.0 481.5L548.0 468.6L541.0 454.6L537.0 442.0z" fill="url(#gw)"/>
<path d="M554.0 457.0L566.0 451.0L569.0 454.6L565.6 469.8L562.0 481.5L556.0 475.0z" fill="#808080" opacity=".6"/>
<path d="M534.0 437.0q2 24 28 44.500" stroke="#1c1c1c" stroke-width="1.300" fill="none"/>
<path d="M557.4 427.0q1 16 11.600 27.600" stroke="#1c1c1c" stroke-width="1.200" fill="none"/>
<path d="M548.0 431.5q2 20 16 33" stroke="#555" stroke-width="1.200" fill="none"/>
<path d="M539.0 435.5q2 22 22 40" stroke="#fff" stroke-width="2.400" fill="none" opacity=".9"/>
<path d="M552.0 429.5q2 14 12 26" stroke="#fff" stroke-width="2" fill="none" opacity=".9"/>
<path d="M608.0 403.0L632.0 408.0L643.0 427.0L627.0 433.0L617.0 432.0z" fill="url(#gc)"/>
<path d="M629.0 409.0L636.0 406.0L644.0 420.0L656.0 434.0L663.0 440.0L655.0 445.0L644.0 433.0L635.0 424.0z" fill="url(#gw)"/>
<path d="M614.0 442.0L644.0 456.0L642.0 462.0L614.0 458.0z" fill="#2e6830"/>
<path d="M616.8 430.7L646.0 449.5L642.6 458.9L615.6 444.8z" fill="#bfc1be"/>
<path d="M624.0 443.0L630.5 445.5L631.0 455.0L625.0 452.5z" fill="#9a3a28"/>
<path d="M619.0 439.0L624.0 442.0L625.0 452.0L620.0 449.0z" fill="#3b7a3e"/>
<path d="M616.8 430.7L623.8 427.2L652.0 444.8L646.0 449.5z" fill="#a9a9a9"/>
<path d="M616.8 430.7L623.8 427.2L636.7 433.0L652.0 444.8" stroke="#1c1c1c" stroke-width="1.200" fill="none"/>
<path d="M618.0 432.5L646.0 450.5" stroke="#f2f2f2" stroke-width="1.400" fill="none"/>
<path d="M584.0 412.0L591.0 409.7L599.0 406.0L607.4 402.0L610.0 415.5L616.0 426.0L619.0 429.6L617.0 436.0L615.6 444.8L614.0 453.0L612.0 456.5L598.0 443.6L591.0 429.6L587.0 417.0z" fill="url(#gw)"/>
<path d="M604.0 432.0L616.0 426.0L619.0 429.6L615.6 444.8L612.0 456.5L606.0 450.0z" fill="#808080" opacity=".6"/>
<path d="M584.0 412.0q2 24 28 44.500" stroke="#1c1c1c" stroke-width="1.300" fill="none"/>
<path d="M607.4 402.0q1 16 11.600 27.600" stroke="#1c1c1c" stroke-width="1.200" fill="none"/>
<path d="M598.0 406.5q2 20 16 33" stroke="#555" stroke-width="1.200" fill="none"/>
<path d="M589.0 410.5q2 22 22 40" stroke="#fff" stroke-width="2.400" fill="none" opacity=".9"/>
<path d="M602.0 404.5q2 14 12 26" stroke="#fff" stroke-width="2" fill="none" opacity=".9"/>
<path d="M657.0 387.0L681.0 392.0L692.0 411.0L676.0 417.0L666.0 416.0z" fill="url(#gc)"/>
<path d="M678.0 393.0L685.0 390.0L693.0 404.0L705.0 418.0L712.0 424.0L704.0 429.0L693.0 417.0L684.0 408.0z" fill="url(#gw)"/>
<path d="M663.0 426.0L693.0 440.0L691.0 446.0L663.0 442.0z" fill="#2e6830"/>
<path d="M665.8 414.7L695.0 433.5L691.6 442.9L664.6 428.8z" fill="#bfc1be"/>
<path d="M673.0 427.0L679.5 429.5L680.0 439.0L674.0 436.5z" fill="#9a3a28"/>
<path d="M668.0 423.0L673.0 426.0L674.0 436.0L669.0 433.0z" fill="#3b7a3e"/>
<path d="M665.8 414.7L672.8 411.2L701.0 428.8L695.0 433.5z" fill="#a9a9a9"/>
<path d="M665.8 414.7L672.8 411.2L685.7 417.0L701.0 428.8" stroke="#1c1c1c" stroke-width="1.200" fill="none"/>
<path d="M667.0 416.5L695.0 434.5" stroke="#f2f2f2" stroke-width="1.400" fill="none"/>
<path d="M633.0 396.0L640.0 393.7L648.0 390.0L656.4 386.0L659.0 399.5L665.0 410.0L668.0 413.6L666.0 420.0L664.6 428.8L663.0 437.0L661.0 440.5L647.0 427.6L640.0 413.6L636.0 401.0z" fill="url(#gw)"/>
<path d="M653.0 416.0L665.0 410.0L668.0 413.6L664.6 428.8L661.0 440.5L655.0 434.0z" fill="#808080" opacity=".6"/>
<path d="M633.0 396.0q2 24 28 44.500" stroke="#1c1c1c" stroke-width="1.300" fill="none"/>
<path d="M656.4 386.0q1 16 11.600 27.600" stroke="#1c1c1c" stroke-width="1.200" fill="none"/>
<path d="M647.0 390.5q2 20 16 33" stroke="#555" stroke-width="1.200" fill="none"/>
<path d="M638.0 394.5q2 22 22 40" stroke="#fff" stroke-width="2.400" fill="none" opacity=".9"/>
<path d="M651.0 388.5q2 14 12 26" stroke="#fff" stroke-width="2" fill="none" opacity=".9"/>
<path d="M684 387L703 379L721 425L701 435z" fill="url(#gc)"/>
<path d="M703 379q3 24 18 46" stroke="#222" stroke-width="1.200" fill="none"/>
<path d="M711 380L756 360L768 378L728 400z" fill="url(#gc)"/>
<ellipse cx="762.500" cy="369" rx="4.500" ry="10" transform="rotate(-30 762.500 369)" fill="#b4b4b4" stroke="#e6e6e6"/>
<path d="M221 590h1v1h-1zM225 595h1v1h-1zM243 613h1v1h-1zM232 602h1v1h-1zM230 616h1v2h-1zM225 599h1v2h-1zM221 609h1v2h-1zM236 590h1v1h-1zM230 625h1v2h-1zM234 614h1v2h-1zM221 613h1v2h-1zM220 603h1v1h-1zM227 591h1v2h-1zM225 602h1v1h-1zM215 592h1v1h-1zM229 615h1v1h-1zM234 610h1v2h-1zM236 607h1v2h-1zM238 603h1v1h-1zM223 617h1v2h-1zM223 589h1v2h-1zM236 622h1v2h-1zM240 620h1v2h-1zM228 617h1v1h-1zM238 627h1v1h-1zM231 601h1v2h-1zM223 594h1v1h-1zM222 608h1v2h-1zM239 608h1v2h-1zM238 600h1v2h-1zM224 604h1v2h-1zM226 618h1v2h-1zM233 611h1v2h-1zM237 600h1v1h-1zM241 618h1v2h-1zM228 611h1v1h-1zM241 624h1v1h-1zM235 612h1v2h-1zM229 608h1v2h-1zM217 597h1v2h-1zM228 595h1v2h-1zM217 606h1v2h-1zM225 586h1v1h-1zM237 633h1v2h-1zM225 610h1v1h-1zM222 587h1v2h-1zM222 616h1v1h-1zM213 597h1v1h-1zM219 589h1v2h-1zM242 613h1v1h-1zM213 596h1v1h-1zM226 600h1v2h-1zM232 584h1v1h-1zM226 619h1v1h-1zM244 610h1v2h-1zM225 609h1v2h-1zM232 630h1v1h-1zM240 619h1v1h-1zM223 600h1v2h-1zM223 608h1v1h-1zM224 598h1v1h-1zM230 611h1v2h-1zM231 624h1v2h-1zM233 584h1v2h-1zM232 622h1v1h-1zM234 625h1v2h-1zM249 618h1v1h-1zM264 625h1v2h-1zM258 632h1v1h-1zM261 624h1v1h-1zM256 630h1v2h-1zM261 630h1v1h-1zM263 630h1v2h-1zM250 624h1v2h-1zM250 617h1v1h-1zM244 613h1v2h-1zM269 631h1v2h-1zM270 630h1v2h-1zM246 620h1v2h-1zM270 631h1v2h-1zM265 635h1v1h-1zM268 634h1v2h-1zM264 629h1v1h-1zM247 622h1v2h-1zM251 626h1v1h-1zM258 623h1v2h-1zM255 626h1v1h-1zM249 618h1v1h-1zM254 625h1v2h-1zM264 625h1v2h-1zM245 625h1v1h-1zM253 629h1v2h-1zM267 635h1v1h-1zM263 635h1v1h-1zM265 591h1v2h-1zM269 600h1v2h-1zM266 602h1v1h-1zM276 610h1v2h-1zM268 594h1v1h-1zM273 604h1v2h-1zM268 601h1v1h-1zM270 599h1v2h-1zM280 621h1v2h-1zM281 617h1v2h-1zM260 595h1v2h-1zM258 590h1v2h-1zM281 616h1v2h-1zM266 601h1v2h-1zM263 588h1v2h-1zM262 589h1v1h-1zM262 596h1v2h-1zM286 618h1v2h-1zM266 594h1v2h-1zM271 602h1v2h-1zM269 597h1v1h-1zM267 602h1v2h-1zM259 590h1v2h-1zM276 600h1v1h-1zM283 574h1v1h-1zM289 599h1v1h-1zM279 612h1v2h-1zM265 587h1v2h-1zM270 573h1v1h-1zM278 595h1v2h-1zM280 582h1v2h-1zM280 589h1v1h-1zM273 589h1v2h-1zM286 609h1v1h-1zM279 569h1v2h-1zM275 568h1v2h-1zM285 608h1v2h-1zM266 593h1v1h-1zM264 587h1v2h-1zM276 600h1v2h-1zM276 597h1v1h-1zM287 605h1v2h-1zM272 575h1v1h-1zM267 593h1v2h-1zM283 606h1v2h-1zM279 589h1v1h-1zM262 577h1v1h-1zM268 594h1v2h-1zM279 612h1v2h-1zM286 614h1v2h-1zM283 579h1v1h-1zM263 574h1v1h-1zM275 600h1v1h-1zM275 568h1v2h-1zM287 606h1v2h-1zM280 575h1v2h-1zM281 611h1v2h-1zM279 602h1v2h-1zM264 586h1v2h-1zM289 599h1v2h-1zM286 594h1v2h-1zM281 612h1v2h-1zM285 586h1v2h-1zM279 603h1v1h-1zM290 594h1v2h-1zM285 600h1v2h-1zM285 600h1v2h-1zM266 580h1v2h-1zM278 591h1v2h-1zM272 607h1v2h-1zM282 610h1v2h-1zM274 592h1v1h-1zM291 593h1v1h-1zM267 577h1v2h-1zM284 592h1v2h-1zM285 599h1v2h-1zM283 588h1v2h-1zM264 579h1v2h-1zM277 593h1v2h-1zM272 607h1v1h-1zM269 600h1v2h-1zM264 581h1v2h-1zM262 574h1v2h-1zM278 584h1v1h-1zM262 581h1v2h-1zM261 576h1v1h-1zM272 577h1v2h-1zM273 573h1v2h-1zM287 603h1v2h-1zM272 577h1v2h-1zM282 611h1v2h-1zM287 593h1v1h-1zM296 600h1v1h-1zM306 609h1v2h-1zM300 603h1v2h-1zM301 606h1v2h-1zM298 605h1v1h-1zM308 614h1v1h-1zM299 612h1v2h-1zM300 601h1v1h-1zM299 610h1v1h-1zM318 612h1v1h-1zM294 606h1v1h-1zM316 611h1v2h-1zM292 606h1v2h-1zM304 608h1v2h-1zM303 610h1v2h-1zM300 606h1v1h-1zM294 604h1v1h-1zM307 613h1v2h-1zM297 603h1v1h-1zM308 616h1v2h-1zM305 605h1v2h-1zM307 612h1v2h-1zM307 611h1v2h-1zM309 618h1v1h-1zM311 581h1v2h-1zM319 589h1v2h-1zM326 602h1v1h-1zM319 595h1v1h-1zM326 601h1v2h-1zM311 575h1v1h-1zM312 574h1v2h-1zM320 590h1v2h-1zM323 595h1v1h-1zM320 590h1v1h-1zM332 604h1v2h-1zM309 573h1v2h-1zM330 607h1v1h-1zM331 604h1v2h-1zM321 594h1v2h-1zM318 583h1v2h-1zM310 575h1v1h-1zM327 599h1v2h-1zM317 582h1v2h-1zM319 594h1v1h-1zM311 578h1v2h-1zM307 576h1v2h-1zM330 604h1v2h-1zM308 574h1v2h-1zM309 572h1v2h-1zM331 605h1v2h-1zM311 576h1v2h-1zM314 579h1v2h-1zM335 587h1v1h-1zM318 546h1v2h-1zM326 569h1v1h-1zM330 549h1v2h-1zM329 571h1v2h-1zM314 555h1v2h-1zM322 547h1v1h-1zM334 549h1v2h-1zM322 563h1v2h-1zM333 586h1v2h-1zM323 574h1v2h-1zM331 552h1v2h-1zM335 591h1v1h-1zM318 570h1v2h-1zM323 568h1v2h-1zM328 555h1v2h-1zM327 586h1v2h-1zM316 561h1v2h-1zM324 570h1v2h-1zM320 550h1v2h-1zM319 558h1v1h-1zM322 564h1v1h-1zM330 578h1v1h-1zM329 567h1v2h-1zM332 556h1v2h-1zM322 570h1v2h-1zM319 569h1v2h-1zM338 586h1v1h-1zM318 569h1v2h-1zM326 577h1v2h-1zM310 552h1v2h-1zM322 571h1v1h-1zM342 567h1v2h-1zM339 572h1v2h-1zM339 578h1v2h-1zM318 568h1v1h-1zM328 546h1v2h-1zM330 542h1v1h-1zM337 572h1v1h-1zM325 565h1v1h-1zM331 577h1v1h-1zM340 572h1v2h-1zM330 541h1v2h-1zM323 574h1v1h-1zM338 565h1v2h-1zM342 567h1v1h-1zM332 577h1v2h-1zM325 583h1v1h-1zM339 562h1v2h-1zM327 561h1v1h-1zM340 570h1v2h-1zM333 545h1v1h-1zM327 565h1v1h-1zM314 559h1v2h-1zM330 572h1v2h-1zM326 552h1v1h-1zM329 564h1v2h-1zM327 555h1v2h-1zM333 578h1v1h-1zM321 567h1v1h-1zM333 545h1v2h-1zM322 559h1v2h-1zM335 588h1v1h-1zM333 565h1v2h-1zM315 557h1v1h-1zM327 574h1v2h-1zM337 571h1v2h-1zM340 577h1v1h-1zM331 589h1v2h-1zM362 592h1v1h-1zM353 578h1v2h-1zM365 586h1v1h-1zM360 593h1v2h-1zM361 591h1v2h-1zM347 576h1v1h-1zM361 588h1v1h-1zM361 585h1v2h-1zM364 584h1v1h-1zM343 577h1v1h-1zM349 582h1v1h-1zM354 590h1v2h-1zM368 587h1v2h-1zM363 592h1v2h-1zM351 587h1v1h-1zM351 584h1v2h-1zM357 586h1v2h-1zM346 581h1v2h-1zM347 573h1v2h-1zM342 570h1v1h-1zM358 592h1v1h-1zM355 581h1v2h-1zM364 588h1v2h-1zM342 578h1v2h-1zM367 593h1v2h-1zM376 568h1v2h-1zM367 558h1v1h-1zM363 557h1v1h-1zM373 566h1v2h-1zM371 566h1v1h-1zM376 572h1v2h-1zM372 572h1v1h-1zM371 562h1v2h-1zM379 571h1v1h-1zM371 558h1v2h-1zM365 558h1v2h-1zM376 576h1v1h-1zM374 569h1v2h-1zM364 549h1v1h-1zM369 567h1v2h-1zM364 557h1v1h-1zM362 555h1v2h-1zM377 580h1v1h-1zM383 574h1v2h-1zM365 558h1v1h-1zM364 557h1v2h-1zM358 552h1v2h-1zM368 561h1v2h-1zM363 558h1v2h-1zM359 554h1v1h-1zM355 547h1v2h-1zM374 572h1v1h-1zM373 529h1v2h-1zM381 539h1v2h-1zM380 522h1v2h-1zM383 545h1v2h-1zM376 524h1v2h-1zM377 545h1v2h-1zM379 520h1v2h-1zM365 519h1v1h-1zM378 528h1v2h-1zM394 536h1v2h-1zM383 510h1v2h-1zM384 528h1v2h-1zM393 543h1v2h-1zM368 528h1v2h-1zM382 525h1v1h-1zM369 526h1v2h-1zM387 555h1v1h-1zM363 518h1v1h-1zM374 544h1v2h-1zM378 522h1v1h-1zM382 539h1v2h-1zM372 536h1v2h-1zM376 524h1v2h-1zM385 531h1v2h-1zM373 517h1v2h-1zM388 558h1v1h-1zM384 527h1v2h-1zM383 534h1v2h-1zM386 556h1v2h-1zM379 530h1v2h-1zM388 545h1v2h-1zM390 528h1v2h-1zM368 517h1v2h-1zM383 519h1v2h-1zM384 533h1v1h-1zM387 517h1v2h-1zM377 545h1v2h-1zM362 519h1v2h-1zM369 533h1v2h-1zM375 529h1v2h-1zM381 523h1v2h-1zM376 530h1v2h-1zM381 534h1v2h-1zM375 535h1v2h-1zM374 516h1v1h-1zM383 549h1v1h-1zM372 530h1v1h-1zM380 512h1v2h-1zM379 550h1v1h-1zM369 526h1v2h-1zM379 537h1v1h-1zM371 523h1v2h-1zM379 529h1v2h-1zM385 517h1v2h-1zM379 512h1v2h-1zM381 531h1v1h-1zM381 519h1v2h-1zM386 518h1v2h-1zM387 561h1v2h-1zM389 547h1v2h-1zM384 511h1v2h-1zM387 557h1v2h-1zM380 517h1v2h-1zM379 521h1v2h-1zM382 521h1v1h-1zM415 563h1v1h-1zM396 545h1v1h-1zM402 551h1v2h-1zM408 560h1v2h-1zM409 549h1v2h-1zM396 540h1v1h-1zM396 545h1v2h-1zM408 552h1v1h-1zM400 553h1v1h-1zM414 553h1v1h-1zM409 557h1v1h-1zM404 552h1v1h-1zM399 554h1v2h-1zM420 557h1v1h-1zM406 552h1v1h-1zM411 562h1v1h-1zM409 560h1v2h-1zM393 551h1v2h-1zM410 550h1v2h-1zM432 544h1v2h-1zM417 522h1v2h-1zM415 525h1v2h-1zM422 528h1v2h-1zM427 538h1v2h-1zM427 532h1v1h-1zM428 535h1v2h-1zM416 518h1v2h-1zM424 529h1v2h-1zM427 532h1v2h-1zM433 544h1v1h-1zM423 540h1v2h-1zM415 528h1v2h-1zM414 521h1v2h-1zM427 546h1v1h-1zM414 527h1v2h-1zM423 540h1v2h-1zM413 516h1v2h-1zM429 543h1v2h-1zM422 526h1v2h-1zM423 539h1v1h-1zM432 540h1v1h-1zM436 548h1v2h-1zM418 524h1v2h-1zM429 543h1v2h-1zM414 521h1v1h-1zM495 487h1v1h-1zM504 464h1v1h-1zM503 458h1v2h-1zM486 468h1v2h-1zM516 485h1v2h-1zM510 467h1v2h-1zM504 495h1v2h-1zM496 492h1v1h-1zM510 508h1v2h-1zM506 495h1v2h-1zM509 499h1v2h-1zM511 472h1v1h-1zM512 495h1v2h-1zM502 490h1v2h-1zM484 466h1v1h-1zM509 482h1v2h-1zM510 482h1v1h-1zM512 485h1v2h-1zM514 495h1v2h-1zM497 496h1v2h-1zM511 499h1v1h-1zM494 486h1v2h-1zM489 475h1v1h-1zM498 488h1v2h-1zM502 495h1v1h-1zM496 493h1v1h-1zM507 482h1v2h-1zM503 459h1v1h-1zM508 468h1v2h-1zM515 491h1v2h-1zM504 474h1v2h-1zM512 486h1v2h-1zM502 489h1v2h-1zM501 472h1v1h-1zM508 493h1v2h-1zM516 486h1v1h-1zM485 469h1v1h-1zM485 471h1v2h-1zM503 484h1v2h-1zM499 490h1v2h-1zM492 470h1v1h-1zM494 486h1v2h-1zM512 479h1v1h-1zM505 485h1v2h-1zM515 484h1v2h-1zM485 468h1v1h-1zM515 489h1v1h-1zM506 497h1v1h-1zM504 490h1v2h-1zM503 492h1v2h-1zM496 460h1v2h-1zM506 471h1v1h-1zM512 481h1v1h-1zM510 493h1v1h-1zM505 473h1v1h-1zM505 487h1v1h-1zM492 471h1v2h-1zM491 476h1v1h-1zM505 504h1v2h-1zM495 471h1v2h-1zM499 465h1v2h-1zM484 466h1v2h-1zM501 460h1v2h-1zM500 484h1v1h-1zM485 470h1v2h-1zM499 470h1v2h-1zM528 506h1v1h-1zM525 496h1v2h-1zM536 509h1v2h-1zM519 491h1v2h-1zM528 499h1v2h-1zM528 493h1v2h-1zM523 496h1v2h-1zM535 501h1v1h-1zM527 501h1v1h-1zM522 501h1v2h-1zM518 489h1v2h-1zM539 507h1v2h-1zM534 509h1v2h-1zM525 493h1v2h-1zM531 507h1v2h-1zM521 491h1v2h-1zM527 494h1v2h-1zM529 495h1v2h-1zM518 496h1v1h-1zM528 498h1v2h-1zM537 508h1v2h-1zM521 501h1v2h-1zM524 499h1v2h-1zM552 494h1v1h-1zM553 493h1v2h-1zM551 491h1v1h-1zM548 492h1v2h-1zM532 468h1v1h-1zM531 462h1v2h-1zM555 488h1v2h-1zM540 480h1v2h-1zM538 471h1v1h-1zM534 465h1v2h-1zM549 484h1v1h-1zM535 472h1v2h-1zM545 487h1v2h-1zM554 488h1v1h-1zM535 467h1v2h-1zM554 489h1v2h-1zM539 470h1v2h-1zM555 487h1v2h-1zM538 467h1v2h-1zM535 472h1v2h-1zM540 471h1v1h-1zM558 491h1v2h-1zM533 466h1v2h-1zM556 493h1v1h-1zM558 491h1v2h-1zM567 453h1v2h-1zM556 476h1v2h-1zM560 444h1v2h-1zM566 460h1v2h-1zM542 438h1v2h-1zM558 434h1v1h-1zM540 443h1v2h-1zM546 439h1v1h-1zM547 466h1v1h-1zM564 460h1v2h-1zM564 466h1v1h-1zM554 435h1v1h-1zM549 460h1v2h-1zM542 439h1v1h-1zM560 440h1v2h-1zM555 439h1v2h-1zM558 435h1v2h-1zM548 466h1v1h-1zM541 444h1v1h-1zM561 459h1v2h-1zM550 438h1v1h-1zM552 440h1v2h-1zM546 450h1v2h-1zM563 462h1v2h-1zM553 429h1v2h-1zM546 461h1v2h-1zM558 461h1v2h-1zM562 459h1v2h-1zM553 462h1v1h-1zM551 454h1v1h-1zM546 456h1v2h-1zM549 434h1v1h-1zM567 457h1v1h-1zM551 467h1v2h-1zM565 468h1v2h-1zM540 437h1v2h-1zM545 449h1v2h-1zM539 446h1v1h-1zM550 461h1v2h-1zM552 454h1v1h-1zM562 470h1v1h-1zM564 447h1v1h-1zM554 467h1v2h-1zM556 444h1v2h-1zM554 445h1v2h-1zM551 442h1v1h-1zM544 455h1v1h-1zM564 451h1v2h-1zM552 456h1v2h-1zM562 468h1v2h-1zM551 433h1v1h-1zM562 443h1v2h-1zM560 478h1v2h-1zM557 468h1v2h-1zM543 436h1v1h-1zM551 470h1v1h-1zM561 461h1v2h-1zM541 450h1v2h-1zM558 468h1v2h-1zM554 432h1v2h-1zM547 433h1v2h-1zM547 457h1v1h-1zM545 452h1v2h-1zM556 458h1v2h-1zM587 469h1v1h-1zM591 475h1v1h-1zM596 475h1v1h-1zM568 464h1v2h-1zM566 467h1v2h-1zM572 459h1v2h-1zM577 474h1v1h-1zM588 471h1v2h-1zM570 460h1v1h-1zM570 470h1v2h-1zM581 469h1v2h-1zM567 468h1v1h-1zM580 467h1v1h-1zM568 458h1v1h-1zM569 470h1v2h-1zM567 459h1v2h-1zM588 479h1v2h-1zM588 476h1v1h-1zM573 462h1v2h-1zM572 467h1v2h-1zM571 463h1v2h-1zM586 470h1v2h-1zM568 468h1v1h-1zM587 472h1v1h-1zM574 461h1v2h-1zM588 480h1v1h-1zM590 439h1v1h-1zM592 451h1v1h-1zM589 436h1v2h-1zM596 446h1v2h-1zM588 444h1v2h-1zM594 445h1v2h-1zM601 463h1v2h-1zM601 457h1v2h-1zM591 447h1v2h-1zM597 457h1v1h-1zM591 449h1v2h-1zM592 442h1v2h-1zM601 459h1v1h-1zM610 464h1v1h-1zM599 453h1v1h-1zM598 451h1v1h-1zM586 443h1v2h-1zM590 447h1v2h-1zM606 463h1v2h-1zM605 464h1v2h-1zM604 468h1v2h-1zM594 451h1v2h-1zM591 445h1v1h-1zM596 450h1v2h-1zM591 444h1v2h-1zM600 459h1v2h-1zM601 452h1v2h-1zM584 432h1v1h-1zM598 411h1v2h-1zM603 422h1v1h-1zM612 427h1v2h-1zM603 446h1v1h-1zM607 440h1v2h-1zM602 440h1v2h-1zM602 419h1v1h-1zM608 442h1v1h-1zM610 422h1v1h-1zM605 404h1v2h-1zM609 417h1v1h-1zM613 427h1v1h-1zM588 411h1v2h-1zM587 413h1v2h-1zM612 417h1v1h-1zM616 432h1v1h-1zM597 432h1v2h-1zM592 417h1v2h-1zM610 443h1v2h-1zM598 411h1v2h-1zM596 409h1v2h-1zM604 414h1v1h-1zM603 433h1v2h-1zM611 418h1v2h-1zM599 427h1v2h-1zM602 410h1v2h-1zM604 412h1v2h-1zM601 407h1v1h-1zM607 408h1v2h-1zM606 434h1v1h-1zM607 422h1v1h-1zM595 416h1v1h-1zM591 416h1v2h-1zM601 416h1v2h-1zM592 415h1v2h-1zM596 408h1v1h-1zM617 430h1v2h-1zM604 431h1v2h-1zM590 424h1v2h-1zM602 408h1v2h-1zM606 436h1v2h-1zM613 450h1v2h-1zM609 413h1v2h-1zM597 441h1v1h-1zM596 409h1v2h-1zM611 452h1v2h-1zM598 429h1v1h-1zM609 423h1v2h-1zM591 426h1v2h-1zM589 417h1v1h-1zM595 434h1v1h-1zM598 430h1v2h-1zM602 437h1v2h-1zM599 416h1v1h-1zM603 438h1v1h-1zM605 441h1v2h-1zM600 420h1v2h-1zM606 407h1v2h-1zM596 422h1v2h-1zM594 419h1v2h-1zM609 407h1v1h-1zM603 425h1v2h-1zM598 425h1v2h-1zM598 424h1v1h-1zM610 441h1v2h-1zM612 428h1v2h-1zM615 431h1v1h-1zM602 410h1v2h-1zM618 437h1v2h-1zM622 444h1v2h-1zM633 445h1v2h-1zM641 452h1v2h-1zM637 454h1v2h-1zM620 442h1v2h-1zM637 447h1v2h-1zM617 445h1v1h-1zM644 449h1v2h-1zM630 452h1v1h-1zM621 440h1v2h-1zM630 442h1v2h-1zM628 440h1v2h-1zM628 449h1v2h-1zM641 455h1v2h-1zM641 447h1v1h-1zM631 443h1v1h-1zM642 459h1v1h-1zM634 443h1v2h-1zM644 454h1v1h-1zM625 437h1v2h-1zM630 446h1v1h-1zM650 425h1v2h-1zM653 433h1v1h-1zM642 415h1v2h-1zM652 435h1v1h-1zM634 411h1v2h-1zM633 413h1v2h-1zM652 439h1v2h-1zM644 420h1v2h-1zM642 417h1v2h-1zM659 437h1v2h-1zM644 428h1v2h-1zM646 421h1v2h-1zM645 421h1v2h-1zM651 435h1v2h-1zM659 436h1v2h-1zM658 438h1v1h-1zM640 414h1v2h-1zM633 409h1v2h-1zM654 436h1v2h-1zM647 423h1v2h-1zM646 432h1v1h-1zM660 438h1v1h-1zM655 443h1v1h-1zM649 432h1v2h-1zM641 417h1v1h-1zM648 421h1v2h-1zM659 437h1v2h-1zM650 417h1v1h-1zM658 405h1v2h-1zM663 417h1v2h-1zM652 407h1v2h-1zM650 410h1v2h-1zM660 398h1v1h-1zM657 402h1v1h-1zM655 410h1v2h-1zM663 402h1v1h-1zM659 397h1v2h-1zM643 406h1v1h-1zM647 421h1v2h-1zM660 423h1v2h-1zM649 403h1v2h-1zM642 400h1v1h-1zM662 405h1v2h-1zM645 412h1v1h-1zM651 394h1v2h-1zM645 408h1v2h-1zM650 397h1v1h-1zM657 411h1v1h-1zM654 391h1v1h-1zM661 411h1v2h-1zM650 390h1v2h-1zM653 396h1v1h-1zM658 426h1v1h-1zM651 413h1v2h-1zM640 394h1v2h-1zM657 401h1v2h-1zM657 413h1v1h-1zM660 408h1v2h-1zM664 409h1v1h-1zM646 391h1v2h-1zM665 412h1v2h-1zM647 427h1v1h-1zM652 418h1v1h-1zM640 404h1v2h-1zM658 427h1v2h-1zM653 394h1v1h-1zM656 418h1v2h-1zM653 393h1v2h-1zM635 399h1v2h-1zM647 409h1v2h-1zM658 408h1v2h-1zM658 433h1v1h-1zM656 410h1v2h-1zM661 429h1v2h-1zM656 412h1v2h-1zM651 425h1v2h-1zM641 405h1v2h-1zM663 426h1v2h-1zM654 392h1v2h-1zM663 410h1v1h-1zM639 403h1v2h-1zM657 410h1v2h-1zM642 410h1v1h-1zM654 410h1v2h-1zM645 408h1v2h-1zM662 414h1v1h-1zM639 404h1v2h-1zM659 396h1v1h-1zM652 404h1v2h-1zM662 429h1v2h-1zM661 424h1v2h-1zM650 416h1v2h-1zM657 401h1v1h-1zM653 422h1v2h-1zM642 395h1v2h-1zM651 402h1v1h-1zM653 395h1v1h-1zM657 392h1v2h-1zM656 416h1v1h-1zM669 419h1v1h-1zM674 421h1v1h-1zM681 432h1v2h-1zM693 436h1v2h-1zM686 437h1v2h-1zM688 434h1v2h-1zM686 430h1v2h-1zM688 430h1v2h-1zM669 417h1v2h-1zM667 420h1v1h-1zM672 421h1v1h-1zM691 436h1v2h-1zM674 430h1v1h-1zM685 427h1v2h-1zM686 429h1v1h-1zM665 428h1v2h-1zM668 417h1v2h-1zM684 427h1v2h-1zM681 430h1v2h-1zM671 427h1v2h-1zM690 442h1v1h-1zM675 426h1v1h-1zM685 431h1v2h-1zM688 431h1v1h-1zM679 428h1v1h-1zM674 433h1v1h-1zM691 438h1v1h-1zM699 413h1v2h-1zM690 404h1v1h-1zM710 424h1v2h-1zM687 404h1v1h-1zM697 411h1v2h-1zM683 393h1v2h-1zM706 426h1v2h-1zM688 398h1v2h-1zM693 413h1v2h-1zM685 393h1v1h-1zM686 394h1v1h-1zM689 402h1v1h-1zM693 411h1v1h-1zM689 399h1v2h-1zM706 423h1v2h-1zM699 411h1v1h-1zM700 414h1v2h-1zM701 415h1v2h-1zM704 424h1v2h-1zM703 422h1v1h-1zM687 405h1v2h-1zM686 403h1v1h-1zM691 399h1v2h-1zM681 394h1v1h-1zM696 414h1v1h-1zM687 396h1v2h-1zM460 510h1v2h-1zM466 521h1v2h-1zM459 506h1v2h-1zM460 508h1v2h-1zM458 511h1v2h-1zM459 511h1v1h-1zM458 529h1v2h-1zM464 523h1v2h-1zM462 522h1v2h-1zM461 509h1v1h-1zM459 512h1v2h-1zM459 527h1v1h-1zM460 509h1v2h-1zM698 411h1v2h-1zM693 406h1v2h-1zM696 421h1v1h-1zM694 396h1v1h-1zM690 399h1v2h-1zM695 411h1v1h-1zM690 401h1v2h-1zM692 400h1v2h-1zM706 430h1v2h-1zM694 413h1v2h-1zM694 409h1v2h-1zM692 398h1v1h-1zM696 419h1v1h-1zM696 414h1v2h-1zM690 392h1v1h-1zM694 410h1v1h-1zM702 433h1v1h-1zM697 407h1v2h-1zM686 387h1v2h-1zM692 402h1v2h-1zM692 396h1v1h-1zM688 394h1v2h-1zM686 389h1v2h-1zM694 413h1v2h-1zM217 626h1v2h-1zM211 614h1v2h-1zM222 621h1v2h-1zM210 622h1v1h-1zM220 628h1v2h-1zM213 620h1v1h-1zM220 626h1v1h-1zM219 631h1v1h-1zM205 621h1v1h-1zM217 615h1v2h-1zM230 637h1v2h-1zM218 616h1v1h-1zM225 629h1v2h-1zM216 613h1v1h-1zM225 637h1v1h-1zM216 620h1v2h-1zM207 628h1v2h-1zM205 625h1v1h-1zM219 612h1v2h-1zM218 626h1v2h-1zM221 632h1v2h-1zM226 631h1v2h-1zM221 619h1v1h-1zM208 623h1v1h-1zM224 628h1v2h-1zM211 632h1v2h-1zM221 637h1v1h-1zM216 641h1v2h-1zM231 637h1v2h-1zM212 624h1v2h-1zM217 617h1v2h-1zM212 625h1v1h-1zM218 617h1v2h-1zM226 635h1v2h-1zM206 625h1v2h-1z" fill="#2c7a31"/>
<path d="M220 590h2v1h-2zM223 596h2v1h-2zM231 609h2v1h-2zM216 597h2v1h-2zM227 604h2v1h-2zM231 586h2v1h-2zM227 599h2v1h-2zM243 611h2v1h-2zM238 608h2v1h-2zM236 608h2v1h-2zM222 612h2v1h-2zM212 592h2v1h-2zM217 599h2v1h-2zM229 606h2v1h-2zM239 596h2v1h-2zM232 611h2v1h-2zM218 595h2v1h-2zM241 622h2v1h-2zM234 584h2v1h-2zM221 601h2v1h-2zM230 626h2v1h-2zM250 625h2v1h-2zM258 631h2v1h-2zM267 635h2v1h-2zM259 589h2v1h-2zM259 589h2v1h-2zM283 616h2v1h-2zM263 596h2v1h-2zM273 611h2v1h-2zM281 623h2v1h-2zM275 610h2v1h-2zM274 611h2v1h-2zM273 574h2v1h-2zM285 618h2v1h-2zM291 591h2v1h-2zM287 610h2v1h-2zM280 608h2v1h-2zM281 571h2v1h-2zM281 614h2v1h-2zM277 597h2v1h-2zM279 591h2v1h-2zM285 618h2v1h-2zM284 604h2v1h-2zM287 607h2v1h-2zM279 591h2v1h-2zM281 598h2v1h-2zM280 605h2v1h-2zM280 576h2v1h-2zM271 604h2v1h-2zM287 591h2v1h-2zM297 605h2v1h-2zM303 611h2v1h-2zM298 605h2v1h-2zM316 616h2v1h-2zM303 615h2v1h-2zM295 605h2v1h-2zM310 618h2v1h-2zM318 585h2v1h-2zM316 589h2v1h-2zM324 600h2v1h-2zM324 559h2v1h-2zM326 555h2v1h-2zM337 586h2v1h-2zM315 558h2v1h-2zM320 549h2v1h-2zM338 564h2v1h-2zM323 576h2v1h-2zM328 572h2v1h-2zM337 568h2v1h-2zM339 563h2v1h-2zM339 568h2v1h-2zM333 559h2v1h-2zM314 561h2v1h-2zM318 553h2v1h-2zM331 559h2v1h-2zM332 589h2v1h-2zM320 574h2v1h-2zM334 579h2v1h-2zM367 590h2v1h-2zM350 580h2v1h-2zM354 581h2v1h-2zM365 595h2v1h-2zM358 586h2v1h-2zM346 579h2v1h-2zM374 576h2v1h-2zM378 571h2v1h-2zM370 563h2v1h-2zM361 546h2v1h-2zM393 543h2v1h-2zM392 530h2v1h-2zM387 561h2v1h-2zM387 556h2v1h-2zM388 547h2v1h-2zM394 538h2v1h-2zM373 522h2v1h-2zM387 559h2v1h-2zM390 528h2v1h-2zM383 554h2v1h-2zM373 520h2v1h-2zM373 546h2v1h-2zM365 523h2v1h-2zM378 534h2v1h-2zM372 530h2v1h-2zM382 529h2v1h-2zM380 512h2v1h-2zM372 537h2v1h-2zM368 533h2v1h-2zM375 544h2v1h-2zM384 525h2v1h-2zM367 517h2v1h-2zM402 549h2v1h-2zM402 556h2v1h-2zM412 552h2v1h-2zM410 553h2v1h-2zM396 546h2v1h-2zM403 556h2v1h-2zM396 545h2v1h-2zM417 561h2v1h-2zM397 546h2v1h-2zM415 554h2v1h-2zM416 559h2v1h-2zM414 556h2v1h-2zM421 526h2v1h-2zM427 544h2v1h-2zM416 530h2v1h-2zM422 529h2v1h-2zM433 546h2v1h-2zM495 494h2v1h-2zM511 474h2v1h-2zM500 479h2v1h-2zM504 462h2v1h-2zM510 481h2v1h-2zM489 470h2v1h-2zM503 463h2v1h-2zM509 504h2v1h-2zM502 467h2v1h-2zM514 487h2v1h-2zM509 497h2v1h-2zM508 493h2v1h-2zM492 470h2v1h-2zM510 502h2v1h-2zM495 465h2v1h-2zM490 475h2v1h-2zM507 480h2v1h-2zM496 494h2v1h-2zM507 461h2v1h-2zM510 490h2v1h-2zM505 484h2v1h-2zM537 503h2v1h-2zM516 491h2v1h-2zM526 504h2v1h-2zM519 497h2v1h-2zM543 505h2v1h-2zM519 489h2v1h-2zM520 492h2v1h-2zM540 501h2v1h-2zM536 470h2v1h-2zM554 491h2v1h-2zM543 472h2v1h-2zM551 489h2v1h-2zM543 482h2v1h-2zM550 486h2v1h-2zM546 441h2v1h-2zM562 439h2v1h-2zM550 458h2v1h-2zM551 468h2v1h-2zM554 430h2v1h-2zM567 451h2v1h-2zM556 444h2v1h-2zM567 461h2v1h-2zM557 468h2v1h-2zM554 474h2v1h-2zM562 461h2v1h-2zM539 444h2v1h-2zM559 461h2v1h-2zM559 437h2v1h-2zM557 455h2v1h-2zM557 460h2v1h-2zM538 442h2v1h-2zM563 443h2v1h-2zM552 451h2v1h-2zM555 475h2v1h-2zM551 456h2v1h-2zM543 455h2v1h-2zM545 446h2v1h-2zM572 470h2v1h-2zM581 465h2v1h-2zM568 458h2v1h-2zM581 469h2v1h-2zM590 478h2v1h-2zM600 457h2v1h-2zM589 437h2v1h-2zM592 446h2v1h-2zM595 424h2v1h-2zM609 442h2v1h-2zM594 418h2v1h-2zM613 438h2v1h-2zM610 414h2v1h-2zM598 414h2v1h-2zM602 429h2v1h-2zM611 425h2v1h-2zM598 410h2v1h-2zM588 414h2v1h-2zM598 419h2v1h-2zM612 440h2v1h-2zM601 426h2v1h-2zM594 408h2v1h-2zM597 435h2v1h-2zM604 425h2v1h-2zM594 433h2v1h-2zM613 435h2v1h-2zM612 432h2v1h-2zM624 442h2v1h-2zM626 443h2v1h-2zM636 451h2v1h-2zM640 449h2v1h-2zM618 443h2v1h-2zM623 435h2v1h-2zM631 446h2v1h-2zM626 444h2v1h-2zM635 448h2v1h-2zM656 438h2v1h-2zM653 433h2v1h-2zM641 422h2v1h-2zM647 427h2v1h-2zM659 413h2v1h-2zM645 403h2v1h-2zM646 393h2v1h-2zM655 400h2v1h-2zM655 406h2v1h-2zM644 416h2v1h-2zM662 401h2v1h-2zM644 403h2v1h-2zM653 394h2v1h-2zM649 392h2v1h-2zM658 411h2v1h-2zM638 406h2v1h-2zM662 421h2v1h-2zM656 417h2v1h-2zM646 414h2v1h-2zM677 430h2v1h-2zM678 433h2v1h-2zM668 424h2v1h-2zM684 438h2v1h-2zM689 402h2v1h-2zM696 415h2v1h-2zM703 423h2v1h-2zM690 404h2v1h-2zM685 402h2v1h-2zM466 523h2v1h-2zM464 520h2v1h-2zM465 523h2v1h-2zM462 530h2v1h-2zM698 426h2v1h-2zM695 408h2v1h-2zM688 396h2v1h-2zM696 412h2v1h-2zM222 629h2v1h-2zM207 618h2v1h-2zM222 623h2v1h-2zM212 627h2v1h-2zM213 632h2v1h-2zM219 621h2v1h-2zM229 637h2v1h-2zM224 625h2v1h-2zM217 638h2v1h-2zM209 626h2v1h-2zM227 637h2v1h-2zM221 631h2v1h-2z" fill="#4a4a4a" opacity=".7"/>
</g></svg>
<!-- DIALOG -->
<div id="dlg" class="a">
<div id="dtitle" class="a">
<svg style="left:6px;top:5px" width="18" height="18" viewBox="0 0 18 18"><circle cx="9" cy="10" r="6.5" fill="#4a9bd8"/><path d="M4 11c2 2 7 2 10-2" stroke="#7fca6a" stroke-width="2.5" fill="none"/><path d="M1 12c3 4 12 2 15-7" stroke="#ecd06a" stroke-width="2" fill="none"/><path d="M5 1h8l-4 8z" fill="#d8404a"/></svg>
<div class="t b" style="left:27px;top:7px;color:#fff;font-size:13px;height:16px;line-height:16px;letter-spacing:1px">可视化刀轨轨迹</div>
<div class="a" style="left:230px;top:5px;width:21px;height:21px;border:1px solid #e6dcea;border-radius:3px;background:linear-gradient(135deg,#c9747c,#bd656f 60%,#b25a68)"><svg style="left:4px;top:4px" width="11" height="11" viewBox="0 0 11 11"><path d="M1 1l9 9M10 1L1 10" stroke="#fff" stroke-width="2.2"/></svg></div>
</div>
<div class="a" style="left:7px;top:34px;width:237px;height:90px;background:#fff;border:1px solid #7f9db9"></div>
<div class="a" style="left:9px;top:36px;width:233px;height:12px;background:#316ac5"></div>
<div class="t" style="left:10px;top:35px;color:#fff"><span class="l">GOTO/500.430,-25.176,100.000</span></div>
<div class="a" style="left:8px;top:106px;width:235px;height:16px;background:linear-gradient(#f3f1ec,#fefefb)"></div>
<div class="a" style="left:9px;top:107px;width:16px;height:15px;border:1px solid #b4c3f0;border-radius:2px;background:linear-gradient(#c8d6fb,#bdcaf7 70%,#adbcf0)"><svg style="left:3px;top:3px" width="8" height="8" viewBox="0 0 8 8"><path d="M5.500 .5L2 4l3.500 3.500" stroke="#4d6185" stroke-width="2" fill="none"/></svg></div>
<div class="a" style="left:225px;top:107px;width:16px;height:15px;border:1px solid #b4c3f0;border-radius:2px;background:linear-gradient(#c8d6fb,#bdcaf7 70%,#adbcf0)"><svg style="left:4px;top:3px" width="8" height="8" viewBox="0 0 8 8"><path d="M2.500 .5L6 4 2.500 7.500" stroke="#4d6185" stroke-width="2" fill="none"/></svg></div>
<div class="a" style="left:26px;top:107px;width:82px;height:15px;border:1px solid #b4c3f0;border-radius:2px;background:linear-gradient(#c8d6fb,#bdcaf7 70%,#adbcf0)"><div class="a" style="left:36px;top:4px;width:8px;height:6px;background-image:linear-gradient(90deg,#eef3ff 50%,#8c9fd8 50%);background-size:2px 6px"></div></div>
<div class="t" style="right:5px;top:126px"><span class="l">26844</span></div>
<div class="a" style="left:12px;top:154px;width:218px;height:4px;border-radius:2px;border:1px solid #b7b5a7;border-bottom-color:#fff;border-right-color:#fff;background:#f0efe8"></div>
<svg style="left:224px;top:144px" width="13" height="22" viewBox="0 0 13 22"><path d="M1.500 6L6.500 .8 11.500 6V19.500a1.500 1.500 0 0 1-1.500 1.500H3a1.500 1.500 0 0 1-1.500-1.500z" fill="#f3f3ef" stroke="#9fa89c" stroke-width="1"/><path d="M2 6L6.500 1.300 11 6" stroke="#7fb47a" stroke-width="1.2" fill="none"/><path d="M2 18h9v1.500a1.500 1.500 0 0 1-1.500 1.500H3.500A1.500 1.500 0 0 1 2 19.500z" fill="#3fb23f"/></svg>
<div class="t" style="left:9px;top:165px"><span class="l">1</span></div>
<div class="t" style="right:5px;top:165px"><span class="l">26844</span></div>
<div class="t" style="left:4px;top:184px"><span class="l">Feed Rate (MMPM) 0.000000</span></div>
<div class="a" style="left:7px;top:204px;width:46px;height:16px;border:1px solid #919b9c;border-bottom:0;border-radius:3px 3px 0 0;background:linear-gradient(#fff,#f0efe6)"></div><div class="t" style="left:10px;top:205px">重播</div>
<div class="a" style="left:54px;top:204px;width:54px;height:16px;border:1px solid #919b9c;border-bottom:0;border-radius:3px 3px 0 0;background:linear-gradient(#fff,#f0efe6)"></div><div class="t" style="left:57px;top:205px"><span class="l">3D</span> 动态</div>
<div class="a" style="left:5px;top:219px;width:237px;height:337px;border:1px solid #919b9c;background:linear-gradient(#fbfbf8,#f3f2ec)"></div>
<div class="a" style="left:107px;top:201px;width:56px;height:19px;border:1px solid #919b9c;border-bottom:0;border-top:2px solid #f5b042;border-radius:3px 3px 0 0;background:#fbfbf8"></div><div class="t" style="left:111px;top:204px"><span class="l">2D</span> 动态</div>
<div class="btn " style="left:11px;top:225px;width:111px">显示</div>
<div class="btn " style="left:125px;top:225px;width:112px">比较</div>
<div class="hr" style="left:9px;top:252px;width:229px"></div>
<div class="t dis" style="left:10px;top:259px">生成 <span class="l">IPW</span></div>
<div class="a" style="left:187px;top:256px;width:52px;height:21px;border:1px solid #c3c9d2;background:#ebe8d7"><div class="t dis" style="left:3px;top:2px;color:#9b9989">无</div><div class="a" style="right:1px;top:1px;width:16px;height:17px;border-radius:2px;background:#e9e9e2;border:1px solid #f7f7f4"><svg style="left:3px;top:4px" width="9" height="7" viewBox="0 0 9 7"><path d="M1 1l3.500 4L8 1" stroke="#c0c0b8" stroke-width="2" fill="none"/></svg></div></div>
<div class="cb dis" style="left:11px;top:279px"></div><div class="t dis" style="left:28px;top:278px">将 <span class="l">IPW</span> 保存为组件</div>
<div class="hr" style="left:9px;top:297px;width:229px"></div>
<div class="t" style="left:10px;top:301px">小平面实体</div>
<div class="a" style="left:36px;top:318px;width:177px;height:23px;border:1px solid #d6d4c8;border-radius:3px"></div>
<div class="a" style="left:41px;top:322px;width:13px;height:13px;border-radius:50%;border:1px solid #c6c5b8;background:#fbfbf8"><div class="a" style="left:3px;top:3px;width:5px;height:5px;border-radius:50%;background:#b8b8b0"></div></div><div class="t dis" style="left:58px;top:321px"><span class="l">IPW</span></div>
<div class="a" style="left:97px;top:322px;width:13px;height:13px;border-radius:50%;border:1px solid #c6c5b8;background:#fbfbf8"></div><div class="t dis" style="left:114px;top:321px">过切</div>
<div class="a" style="left:153px;top:322px;width:13px;height:13px;border-radius:50%;border:1px solid #c6c5b8;background:#fbfbf8"></div><div class="t dis" style="left:170px;top:321px">超出</div>
<div class="btn dis" style="left:11px;top:344px;width:111px">创建</div>
<div class="btn dis" style="left:125px;top:344px;width:112px">删除</div>
<div class="hr" style="left:9px;top:371px;width:229px"></div>
<div class="cb" style="left:11px;top:376px"><svg style="left:1px;top:1px" width="9" height="9" viewBox="0 0 9 9"><path d="M1 3.500l2.500 3L8 1.500" stroke="#21a121" stroke-width="2.200" fill="none"/></svg></div><div class="t" style="left:28px;top:375px"><span class="l">IPW</span> 干涉检查</div>
<div class="cb" style="left:11px;top:394px"><svg style="left:1px;top:1px" width="9" height="9" viewBox="0 0 9 9"><path d="M1 3.500l2.500 3L8 1.500" stroke="#21a121" stroke-width="2.200" fill="none"/></svg></div><div class="t" style="left:28px;top:393px">检查刀柄碰撞</div>
<div class="btn " style="left:11px;top:412px;width:111px">选项</div>
<div class="btn " style="left:125px;top:412px;width:112px">列表</div>
<div class="hr" style="left:9px;top:439px;width:229px"></div>
<div class="btn " style="left:11px;top:444px;width:227px">重置</div>
<div class="hr" style="left:9px;top:470px;width:229px"></div>
<div class="cb" style="left:11px;top:474px"></div><div class="t" style="left:28px;top:473px">抑制动画</div>
<div class="t" style="left:4px;top:561px">动画速度</div>
<div class="t" style="right:12px;top:577px"><span class="l">10</span></div>
<div class="a" style="left:12px;top:606px;width:218px;height:4px;border-radius:2px;border:1px solid #b7b5a7;border-bottom-color:#fff;border-right-color:#fff;background:#f0efe8"></div>
<svg style="left:224px;top:596px" width="13" height="22" viewBox="0 0 13 22"><path d="M1.500 6L6.500 .8 11.500 6V19.500a1.500 1.500 0 0 1-1.500 1.500H3a1.500 1.500 0 0 1-1.500-1.500z" fill="#f3f3ef" stroke="#9fa89c" stroke-width="1"/><path d="M2 6L6.500 1.300 11 6" stroke="#7fb47a" stroke-width="1.2" fill="none"/><path d="M2 18h9v1.500a1.500 1.500 0 0 1-1.500 1.500H3.500A1.500 1.500 0 0 1 2 19.500z" fill="#3fb23f"/></svg>
<div class="t" style="left:9px;top:616px"><span class="l">1</span></div>
<div class="t" style="right:4px;top:616px"><span class="l">10</span></div>
<div class="btn" style="left:7px;top:635px;width:31px;height:31px;border-radius:4px;"><svg style="left:5px;top:7px" width="20" height="15" viewBox="0 0 20 15"><rect x="1" y="0" width="2" height="15" fill="#00007a"/><path d="M11 0v15L4 7.500zM19 0v15l-7-7.500z" fill="#8b0000"/></svg></div>
<div class="btn" style="left:41px;top:635px;width:31px;height:31px;border-radius:4px;"><svg style="left:5px;top:7px" width="20" height="15" viewBox="0 0 20 15"><rect x="5" y="0" width="2" height="15" fill="#00007a"/><path d="M16 0v15L8 7.500z" fill="#8b0000"/></svg></div>
<div class="btn" style="left:75px;top:635px;width:31px;height:31px;border-radius:4px;"><svg style="left:5px;top:7px" width="20" height="15" viewBox="0 0 20 15"><path d="M14 0v15L6 7.500z" fill="#8b0000"/></svg></div>
<div class="btn" style="left:109px;top:635px;width:31px;height:31px;border-radius:4px;"><svg style="left:5px;top:7px" width="20" height="15" viewBox="0 0 20 15"><path d="M7 0v15l8-7.500z" fill="#8b0000"/></svg></div>
<div class="btn" style="left:143px;top:635px;width:31px;height:31px;border-radius:4px;"><svg style="left:5px;top:7px" width="20" height="15" viewBox="0 0 20 15"><rect x="14" y="0" width="2" height="15" fill="#00007a"/><path d="M5 0v15l8-7.500z" fill="#8b0000"/></svg></div>
<div class="btn" style="left:177px;top:635px;width:31px;height:31px;border-radius:4px;"><svg style="left:5px;top:7px" width="20" height="15" viewBox="0 0 20 15"><rect x="17" y="0" width="2" height="15" fill="#00007a"/><path d="M1 0v15l7-7.500zM9 0v15l7-7.500z" fill="#8b0000"/></svg></div>
<div class="btn" style="left:211px;top:635px;width:31px;height:31px;border-radius:4px;border-color:#dddbd0;background:#f3f2ea"><svg style="left:5px;top:7px" width="20" height="15" viewBox="0 0 20 15"><rect x="4" y="1" width="13" height="13" fill="#aca899"/></svg></div>
<div class="hr" style="left:4px;top:673px;width:240px"></div>
<div class="btn" style="left:126px;top:679px;width:52px;height:20px;line-height:17px;box-shadow:inset 0 0 0 2px #a9c4f5">确定</div>
<div class="btn" style="left:184px;top:679px;width:52px;height:20px;line-height:17px">取消</div>
</div>
<!-- below dialog, right strip of main window -->
<div class="a" style="left:980px;top:711px;width:10px;height:26px;background:#ece9d8"></div>
<div class="a" style="left:990px;top:711px;width:34px;height:26px;background:#aca899"></div>
<!-- TASKBAR -->
<div class="a" style="left:70px;top:734px;width:910px;height:2px;background:#e2782a"></div>
<div class="a" style="left:0;top:736px;width:1024px;height:2px;background:#fff"></div>
<div id="task" class="a" style="left:0;top:738px;width:1024px;height:30px;background:linear-gradient(#3c8df5 0,#2f7aec 2px,#2663e0 5px,#245ddb 12px,#2560dc 23px,#2057cf 27px,#1c4ab8 30px)">
 <div class="a" style="left:0;top:0;width:98px;height:30px;border-radius:0 12px 12px 0/0 16px 16px 0;background:linear-gradient(#5eac56 0,#3f973f 4px,#388e38 12px,#3a923a 22px,#2f7d2f 28px,#286c28 31px);box-shadow:1px 0 3px #1a3f9a"></div>
 <svg style="left:9px;top:6px" width="20" height="19" viewBox="0 0 20 19"><path d="M2 3c3-2 5-1 7 0l-2 6c-2-1-4-2-7 0z" fill="#e8532b"/><path d="M10 3c3 1 5 1 8-1l-2 7c-3 1-5 1-8 0z" fill="#7cc242"/><path d="M0 11c3-2 5-1 7 0l-2 6c-2-1-4-2-7 0z" fill="#3a8ee6" transform="translate(.5 0)"/><path d="M8 11c3 1 5 1 8 0l-2 6c-3 1-5 1-8 0z" fill="#f5c62c"/></svg>
 <div class="t b" style="left:36px;top:5px;height:20px;line-height:20px;font-size:19px;color:#fff;font-style:italic;font-weight:300;text-shadow:1px 1px 1px #2a5a2a;font-family:'Liberation Sans','Noto Sans CJK SC',sans-serif">开始</div>
 <div class="a" style="left:107px;top:3px;width:159px;height:25px;border-radius:3px;background:linear-gradient(#1d4fb8,#1e52c0 50%,#2258c8);box-shadow:inset 1px 1px 2px #12378a"></div>
 <svg style="left:117px;top:7px" width="18" height="18" viewBox="0 0 18 18"><circle cx="9" cy="10" r="6" fill="#2b8fd6"/><path d="M1 12c3 4 12 2 15-7" stroke="#e9c23b" stroke-width="2" fill="none"/><path d="M5 1h8l-4 8z" fill="#d8202a"/><path d="M3 14c3 2 9 1 12-3" stroke="#e8e8f4" stroke-width="1.5" fill="none"/></svg>
 <div class="t" style="left:137px;top:8px;color:#fff"><span class="l" style="font-size:10.800px;top:0">NX 4 - Manufactu...</span></div>
 <div class="a" style="left:269px;top:3px;width:160px;height:25px;border-radius:3px;background:linear-gradient(#4a8df6,#3a7dee 30%,#3172e6);box-shadow:inset 0 1px 0 #6aa6fa,inset 0 -1px 1px #2258c8"></div>
 <svg style="left:276px;top:11px" width="16" height="10" viewBox="0 0 16 10"><path d="M0 5l6-4h6l4 3v3l-5 3H4z" fill="#d8d8d0"/><path d="M0 5l5 2h7l4-3" stroke="#777" fill="none"/><path d="M5 3h5" stroke="#555"/></svg>
 <div class="t" style="left:295px;top:8px;color:#fff"><span class="l" style="font-size:10.800px;top:0">DATA (E:)</span></div>
 <!-- lang bar icons -->
 <svg style="left:874px;top:8px" width="17" height="13" viewBox="0 0 17 13"><path d="M3 0l1 2 2-2 1 2 2-2 1 2 2-2 1 2" stroke="#111" stroke-width="1" fill="none"/><rect x=".5" y="3.500" width="16" height="9" rx="1.500" fill="#f4f0d8" stroke="#222"/><path d="M2 6h13M2 8h13M4 10.500h9" stroke="#444" stroke-width="1" stroke-dasharray="1 1"/></svg>
 <svg style="left:896px;top:5px" width="16" height="18" viewBox="0 0 16 18"><path d="M.5.5h15v13H9l2 4-5-4H.5z" fill="#f6efb8" stroke="#222"/><path d="M5 5c0-3 6-3 6 0c0 2-3 2-3 4M8 10.500v1.500" stroke="#111" stroke-width="2" fill="none"/></svg>
 <svg style="left:922px;top:5px" width="9" height="16" viewBox="0 0 9 16"><rect x="3" y=".5" width="5.500" height="4" fill="none" stroke="#fff"/><rect x=".5" y="3" width="5.500" height="4" fill="#245edb" stroke="#fff"/><path d="M2 12h5l-2.500 3z" fill="#fff"/></svg>
 <!-- tray -->
 <div class="a" style="left:948px;top:0;width:76px;height:30px;background:linear-gradient(#1ca5f2 0,#1397ea 3px,#0f8ee6 10px,#1093e8 22px,#0d80d6 28px,#0a6ec2 31px);border-left:1px solid #0c58b8"></div>
 <div class="a" style="left:938px;top:6px;width:19px;height:19px;border-radius:50%;background:radial-gradient(circle at 35% 30%,#7fc0fb,#3a8cf0 55%,#1d60d0);box-shadow:0 0 2px #0c3a90"><svg style="left:5px;top:4px" width="8" height="11" viewBox="0 0 8 11"><path d="M6.500 1L2 5.500 6.500 10" stroke="#fff" stroke-width="2.200" fill="none"/></svg></div>
 <svg style="left:958px;top:6px" width="18" height="18" viewBox="0 0 18 18"><rect x="6" y="1" width="10" height="8" fill="#5a4a8c" stroke="#c8c8e0"/><rect x="1" y="5" width="10" height="8" fill="#4a3f80" stroke="#c8c8e0"/><path d="M3 15h7M9 11h7" stroke="#ddd" stroke-width="1.500"/></svg>
 <div class="t" style="left:980px;top:8px;color:#fff"><span class="l" style="font-size:10.800px;top:0">17:21</span></div>
</div>
</body>
</html>
